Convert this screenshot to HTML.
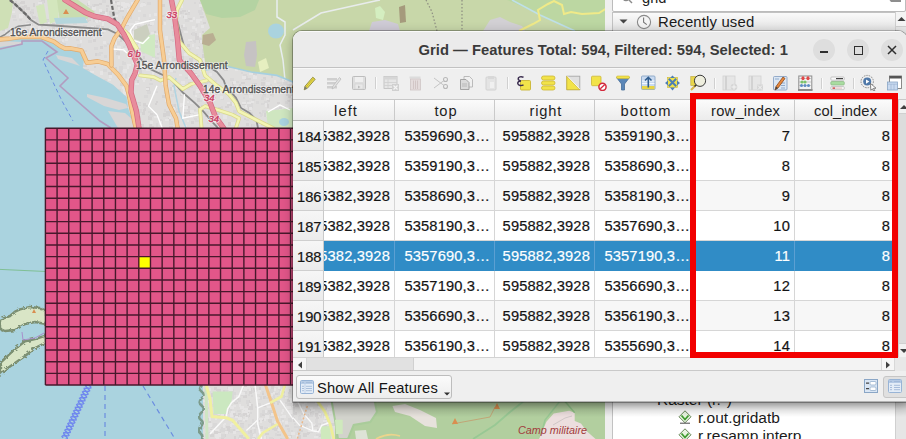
<!DOCTYPE html>
<html><head><meta charset="utf-8"><style>
*{box-sizing:border-box}
html,body{margin:0;padding:0}
body{width:906px;height:439px;overflow:hidden;position:relative;background:#e0dfdf;font-family:"Liberation Sans",sans-serif;color:#1e1e1e}
.a{position:absolute}
#map{position:absolute;left:0;top:0}
#panel{position:absolute;left:605px;top:0;width:301px;height:439px;background:#efefef;overflow:hidden}
#dlgshadow{position:absolute;left:293px;top:31px;width:614px;height:371px;border-radius:9px 9px 0 0;box-shadow:0 0 0 1px rgba(0,0,0,.28),0 3px 12px rgba(0,0,0,.30)}
#dlg{position:absolute;left:293px;top:31px;width:614px;height:371px;background:#efefef;border-radius:9px 9px 0 0;overflow:hidden}
#title{position:absolute;left:0;top:0;width:100%;height:37px;background:#ebebeb;border-bottom:1px solid #c2c2c2;border-top:1px solid #fafafa}
#title .t{position:absolute;left:125.5px;top:10px;font-weight:bold;font-size:14.75px;letter-spacing:0.03px;color:#3a3a3a;white-space:nowrap}
.wb{position:absolute;top:7px;width:22px;height:22px;border-radius:11px;background:#dedede}
#tb{position:absolute;left:0;top:37px;width:100%;height:32px;background:#efefef;border-bottom:1px solid #c8c8c8;border-top:1px solid #f8f8f8}
#tbl{position:absolute;left:0;top:69px;width:605px;height:257px;background:#fff;overflow:hidden}
.hd{position:absolute;top:0;height:21px;background:linear-gradient(#fbfbfb,#ececec);border-right:1px solid #cacaca;border-bottom:1px solid #b9b9b9;font-size:14.7px;text-align:center;line-height:22px;color:#1e1e1e;white-space:nowrap;letter-spacing:0.45px}
.c{position:absolute;height:30px;border-right:1px solid #d6d6d6;border-bottom:1px solid #d6d6d6;font-size:14.7px;line-height:31px;text-align:right;padding-right:4px;white-space:nowrap;overflow:hidden;letter-spacing:0.15px;color:#141414;-webkit-text-stroke:0.2px}
.rh{position:absolute;left:0;width:31px;height:30px;background:linear-gradient(#f6f6f6,#ebebeb);border-right:1px solid #c9c9c9;border-bottom:1px solid #cfcfcf;font-size:14.7px;line-height:32.5px;padding-left:4px;white-space:nowrap;overflow:hidden;color:#141414;-webkit-text-stroke:0.2px}
.sb{position:absolute;background:#f0f0f0}
</style></head><body>
<svg id="map" width="906" height="439" viewBox="0 0 906 439"><defs><filter id="rough" x="-10%" y="-10%" width="120%" height="120%"><feTurbulence type="fractalNoise" baseFrequency="0.28" numOctaves="2" seed="3"/><feDisplacementMap in="SourceGraphic" scale="4"/><feGaussianBlur stdDeviation="0.45"/></filter></defs><rect width="906" height="439" fill="#dfdedd"/><path d="M28 76h4v2h-4zM172 6h2v3h-2zM154 114h4v2h-4zM100 46h3v3h-3zM246 123h3v3h-3zM38 32h3v4h-3zM281 20h2v2h-2zM4 108h2v2h-2zM117 51h3v3h-3zM20 27h2v2h-2zM291 61h3v2h-3zM268 99h2v3h-2zM204 34h3v2h-3zM156 101h2v2h-2zM289 124h3v2h-3zM246 62h3v3h-3zM245 16h3v3h-3zM116 52h4v3h-4zM190 68h4v3h-4zM242 27h2v2h-2zM224 42h3v4h-3zM150 113h4v3h-4zM36 57h2v2h-2zM87 125h2v4h-2zM285 14h2v2h-2zM26 7h4v3h-4zM291 54h4v3h-4zM154 31h2v2h-2zM53 121h3v3h-3zM85 65h2v2h-2zM291 5h2v3h-2zM214 18h4v4h-4zM4 81h4v3h-4zM95 4h4v2h-4zM0 50h3v3h-3zM73 101h2v4h-2zM117 5h2v2h-2zM261 82h4v4h-4zM267 98h3v4h-3zM188 11h2v3h-2zM61 123h2v3h-2zM1 98h4v2h-4zM274 32h2v3h-2zM117 114h3v2h-3zM255 63h4v3h-4zM41 25h2v2h-2zM94 48h4v2h-4zM37 65h3v4h-3zM280 110h4v2h-4zM189 115h3v2h-3zM9 54h3v2h-3zM248 9h3v2h-3zM17 77h4v2h-4zM132 93h2v2h-2zM225 5h2v2h-2zM160 21h3v2h-3zM86 74h3v3h-3zM68 105h3v4h-3zM208 45h2v2h-2zM60 33h3v3h-3zM91 26h4v3h-4zM58 95h2v2h-2zM26 81h3v3h-3zM144 105h4v2h-4zM271 50h4v3h-4zM188 111h3v3h-3zM46 47h2v4h-2zM136 58h3v4h-3zM38 120h2v3h-2zM16 66h3v4h-3zM8 9h3v3h-3zM57 128h3v4h-3zM47 122h4v4h-4zM283 59h3v3h-3zM78 129h3v2h-3zM181 56h3v4h-3zM88 17h3v4h-3zM39 122h2v2h-2zM189 58h4v3h-4zM48 0h2v2h-2zM272 116h2v3h-2zM182 10h4v2h-4zM20 6h4v3h-4zM277 14h2v2h-2zM9 67h2v3h-2zM50 0h2v3h-2zM1 64h3v3h-3zM50 57h4v3h-4zM88 91h4v2h-4zM286 94h3v2h-3zM96 25h4v3h-4zM48 86h2v2h-2zM267 37h4v3h-4zM87 3h2v3h-2zM127 34h4v4h-4zM244 118h2v2h-2zM47 102h4v3h-4zM248 59h2v3h-2zM62 89h3v3h-3zM57 83h4v4h-4zM17 108h4v3h-4zM155 45h3v3h-3zM279 85h2v2h-2zM250 24h3v3h-3zM13 96h4v4h-4zM101 26h3v2h-3zM93 39h3v3h-3zM24 5h3v3h-3zM138 116h3v3h-3zM200 16h4v2h-4zM146 87h4v4h-4zM277 102h3v2h-3zM77 55h3v4h-3zM85 18h4v4h-4zM102 11h3v3h-3zM231 94h4v2h-4zM199 60h2v2h-2zM232 60h2v4h-2zM94 66h2v2h-2zM110 14h3v3h-3zM93 4h2v3h-2zM225 106h4v2h-4zM99 129h3v2h-3zM163 113h3v4h-3zM253 83h4v3h-4zM148 24h4v2h-4zM230 92h3v4h-3zM267 104h2v4h-2zM281 120h3v2h-3zM72 3h3v2h-3zM76 14h3v3h-3zM287 7h4v3h-4zM41 0h4v3h-4zM106 5h3v2h-3zM40 23h4v3h-4zM51 18h4v3h-4zM145 67h3v3h-3zM32 16h4v3h-4zM252 19h3v3h-3zM236 119h4v4h-4zM228 122h3v4h-3zM184 105h2v2h-2zM224 68h4v3h-4zM12 88h3v2h-3zM219 12h3v2h-3zM46 38h3v3h-3zM291 83h2v3h-2zM90 90h2v2h-2zM166 113h4v3h-4zM184 112h4v2h-4zM224 6h2v2h-2zM89 78h4v3h-4zM117 93h2v4h-2zM279 66h2v3h-2zM157 53h3v2h-3zM259 112h2v2h-2zM107 104h4v4h-4zM215 93h2v2h-2zM264 114h3v3h-3zM150 121h2v3h-2zM279 107h3v2h-3zM284 83h3v2h-3zM49 45h2v3h-2zM40 92h4v2h-4zM195 78h3v3h-3zM34 38h3v2h-3zM262 40h2v2h-2zM21 1h4v3h-4zM143 56h2v3h-2zM191 33h2v2h-2zM67 18h3v3h-3zM249 62h2v2h-2zM21 7h4v4h-4zM129 87h4v4h-4zM40 112h3v3h-3zM129 34h2v4h-2zM161 15h4v2h-4zM166 111h4v4h-4zM253 72h4v3h-4zM115 22h4v3h-4zM12 91h4v3h-4zM207 55h4v3h-4zM33 3h2v4h-2zM44 121h4v3h-4zM240 88h3v3h-3zM280 129h2v3h-2zM232 103h2v3h-2zM148 116h4v4h-4zM116 100h4v3h-4zM211 120h4v2h-4zM83 65h2v2h-2zM100 18h2v3h-2zM8 63h3v4h-3zM227 128h3v4h-3zM180 94h2v2h-2zM44 82h3v4h-3zM183 16h3v2h-3zM264 51h2v3h-2zM232 62h4v3h-4zM241 37h2v3h-2zM15 102h4v3h-4zM201 105h2v4h-2zM267 20h4v2h-4zM210 115h4v2h-4zM160 129h3v4h-3zM21 91h2v2h-2zM214 129h4v3h-4zM251 45h3v3h-3zM19 98h3v2h-3zM52 123h4v3h-4zM44 88h3v3h-3zM111 68h3v4h-3zM40 98h2v2h-2zM226 15h2v2h-2zM30 11h4v3h-4zM202 54h3v4h-3zM255 19h3v3h-3zM191 121h3v3h-3zM241 5h2v3h-2zM246 19h4v2h-4zM136 26h2v2h-2zM193 33h4v3h-4zM211 40h2v3h-2zM45 104h4v2h-4zM118 5h3v3h-3zM5 102h4v4h-4zM142 112h3v3h-3zM59 61h4v3h-4zM170 39h3v2h-3zM103 63h2v2h-2zM231 39h2v3h-2zM219 15h2v2h-2zM10 67h2v3h-2zM256 62h2v2h-2zM72 74h2v2h-2zM255 65h4v2h-4zM143 103h3v3h-3zM115 67h2v4h-2zM208 8h2v3h-2zM276 54h3v2h-3zM43 66h2v3h-2zM60 120h4v3h-4zM120 39h2v3h-2zM104 110h3v2h-3zM236 16h4v2h-4zM93 114h4v3h-4zM115 1h4v2h-4zM133 105h2v2h-2zM288 95h4v3h-4zM35 49h2v3h-2zM214 97h2v2h-2zM166 46h4v2h-4zM244 93h4v2h-4zM216 54h4v2h-4zM230 88h4v2h-4zM197 98h3v4h-3zM218 107h3v4h-3zM20 78h4v2h-4zM265 40h3v3h-3zM17 58h3v4h-3zM283 69h2v3h-2zM83 127h3v3h-3zM228 4h3v3h-3zM150 77h2v4h-2zM236 125h2v4h-2zM181 25h3v2h-3zM228 103h4v3h-4zM164 91h4v3h-4zM270 94h4v2h-4zM90 6h2v2h-2zM236 59h2v2h-2zM233 62h4v2h-4zM8 106h4v2h-4zM183 115h3v3h-3zM2 27h3v4h-3zM241 82h4v2h-4zM187 120h2v2h-2zM140 124h4v4h-4zM55 105h2v3h-2zM149 124h3v4h-3zM61 24h3v4h-3zM36 85h2v3h-2zM180 11h3v3h-3zM287 100h2v2h-2zM271 75h2v3h-2zM248 4h3v2h-3zM80 32h3v2h-3zM159 46h4v2h-4zM201 90h4v3h-4zM20 2h3v2h-3zM100 108h2v4h-2zM171 8h2v2h-2zM231 33h3v3h-3zM256 118h2v3h-2zM71 116h2v2h-2zM18 25h2v3h-2zM32 123h3v2h-3zM185 13h2v3h-2zM35 128h3v2h-3zM217 111h3v4h-3zM64 5h3v2h-3zM89 41h2v2h-2zM109 111h4v3h-4zM79 127h4v2h-4zM101 87h2v2h-2zM133 73h4v2h-4zM119 7h4v2h-4zM265 9h4v2h-4zM172 104h4v4h-4zM230 30h3v4h-3zM215 47h3v3h-3zM92 105h4v3h-4zM188 82h4v4h-4zM108 111h3v2h-3zM176 110h4v3h-4zM263 77h3v3h-3zM21 1h2v3h-2zM51 23h4v3h-4zM6 15h4v4h-4zM140 34h2v2h-2zM78 8h2v4h-2zM232 95h3v3h-3zM124 38h2v2h-2zM138 57h2v4h-2zM153 43h2v2h-2zM14 67h2v4h-2zM255 89h3v2h-3zM38 61h3v2h-3zM250 86h3v3h-3zM48 69h4v2h-4zM113 105h4v2h-4zM249 89h3v2h-3zM120 83h4v3h-4zM239 84h2v4h-2zM240 45h4v4h-4zM251 124h4v3h-4zM106 8h2v4h-2zM67 9h2v3h-2zM215 40h4v3h-4zM231 46h2v3h-2zM151 126h3v3h-3zM264 21h2v3h-2zM254 47h4v2h-4zM264 111h4v3h-4zM81 55h3v3h-3zM227 104h4v2h-4zM158 30h4v2h-4zM271 7h4v3h-4zM128 40h3v3h-3zM138 26h3v2h-3zM68 46h3v2h-3zM189 60h4v3h-4zM236 57h2v3h-2zM158 36h2v4h-2zM36 126h4v2h-4zM203 22h3v2h-3zM95 53h3v3h-3zM292 92h2v2h-2zM1 104h4v3h-4zM47 116h2v4h-2zM46 111h3v2h-3zM144 108h2v3h-2zM168 118h3v3h-3zM26 101h2v2h-2zM178 57h4v4h-4zM88 8h2v3h-2zM216 122h3v4h-3zM76 66h3v2h-3zM54 18h4v2h-4zM246 34h2v4h-2zM139 102h2v4h-2zM47 130h2v4h-2zM185 69h4v3h-4zM47 89h3v3h-3zM108 72h4v3h-4zM100 12h3v2h-3zM146 37h2v3h-2zM21 67h3v3h-3zM170 87h2v4h-2zM59 23h4v2h-4zM39 119h3v3h-3zM46 19h3v4h-3zM159 2h2v3h-2zM271 1h4v2h-4zM245 77h3v3h-3zM12 6h3v3h-3zM122 110h2v2h-2zM37 9h3v3h-3zM232 10h4v2h-4zM119 108h2v3h-2zM27 29h2v4h-2zM156 40h2v3h-2zM159 71h2v4h-2zM30 26h4v2h-4zM82 120h4v2h-4zM290 128h3v2h-3zM216 15h2v2h-2zM68 13h4v4h-4zM68 76h3v2h-3zM251 32h3v2h-3zM140 128h2v2h-2zM129 129h2v3h-2zM203 9h4v2h-4zM108 93h2v3h-2zM248 78h3v2h-3zM188 18h4v2h-4zM122 124h3v3h-3zM200 88h3v3h-3zM85 69h4v3h-4zM161 21h2v4h-2zM99 3h3v2h-3zM177 126h3v2h-3zM136 102h3v2h-3zM215 86h3v3h-3zM125 24h4v2h-4zM263 91h2v3h-2zM209 57h4v2h-4zM81 13h4v4h-4zM139 70h3v3h-3zM90 33h4v4h-4zM246 113h2v2h-2zM75 108h2v2h-2zM32 91h4v4h-4zM80 108h4v4h-4zM194 73h3v3h-3zM287 2h3v3h-3zM207 80h3v3h-3zM35 60h3v3h-3zM209 49h3v3h-3zM172 85h2v4h-2zM50 19h2v4h-2zM267 57h4v2h-4zM37 62h2v2h-2zM187 106h3v3h-3zM40 107h3v2h-3zM277 53h3v4h-3zM172 39h2v3h-2zM268 67h3v3h-3zM181 25h3v3h-3zM139 41h3v3h-3zM155 62h4v3h-4zM64 61h3v3h-3zM29 92h3v3h-3zM131 28h2v3h-2zM45 70h2v2h-2zM232 82h2v4h-2zM121 124h3v4h-3zM59 44h2v2h-2zM195 36h4v4h-4zM277 2h2v4h-2zM287 100h3v2h-3zM51 73h4v4h-4zM155 103h2v2h-2zM21 49h4v3h-4zM170 16h4v3h-4zM143 109h2v4h-2zM177 24h3v2h-3zM118 23h2v4h-2zM205 83h3v2h-3zM248 107h3v4h-3zM234 95h2v4h-2zM277 82h3v2h-3zM61 7h2v2h-2zM120 10h4v2h-4zM106 18h2v3h-2zM19 39h3v2h-3zM109 65h3v2h-3zM289 49h4v2h-4zM288 61h4v2h-4zM7 39h4v2h-4zM51 95h2v3h-2zM4 117h2v2h-2zM187 44h3v3h-3zM12 55h3v2h-3zM202 31h2v2h-2zM252 49h2v3h-2zM125 128h2v3h-2zM25 45h3v3h-3zM261 26h3v4h-3zM202 60h4v2h-4zM93 89h3v3h-3zM52 27h3v3h-3zM128 77h4v2h-4zM195 76h2v3h-2zM25 15h4v2h-4zM261 66h3v4h-3zM40 12h2v2h-2zM49 45h4v4h-4zM33 64h2v2h-2zM255 88h4v4h-4zM64 116h2v3h-2zM213 67h4v3h-4zM46 34h3v4h-3zM172 58h4v3h-4zM219 24h4v2h-4zM242 102h4v3h-4zM205 115h3v2h-3zM133 110h2v4h-2zM208 42h2v3h-2zM289 6h3v2h-3zM281 67h2v3h-2zM162 4h3v3h-3zM162 95h4v3h-4zM109 11h3v4h-3zM46 86h2v2h-2zM130 81h4v2h-4zM15 1h2v3h-2zM169 126h4v2h-4zM199 40h4v3h-4zM263 93h3v4h-3zM291 84h2v2h-2zM37 55h4v4h-4zM65 29h2v2h-2zM50 59h4v3h-4zM137 80h2v4h-2zM97 93h4v2h-4zM92 29h3v2h-3zM293 70h4v2h-4zM22 69h4v3h-4zM235 415h4v2h-4zM229 407h4v2h-4zM196 426h3v2h-3zM216 389h4v2h-4zM223 390h3v4h-3zM227 397h3v3h-3zM277 403h2v2h-2zM268 419h4v3h-4zM277 425h3v4h-3zM285 425h4v2h-4zM252 438h4v4h-4zM293 412h4v3h-4zM228 407h4v3h-4zM217 415h3v2h-3zM261 419h3v2h-3zM202 427h2v2h-2zM287 399h3v3h-3zM220 407h3v3h-3zM271 423h4v3h-4zM269 397h3v3h-3zM273 399h4v3h-4zM277 401h3v2h-3zM251 437h3v3h-3zM223 435h3v2h-3zM217 400h3v4h-3zM272 423h4v2h-4zM231 431h4v2h-4zM263 396h3v3h-3zM253 388h4v2h-4zM258 418h4v4h-4zM281 391h2v4h-2zM293 394h4v2h-4zM245 411h4v4h-4zM276 422h2v2h-2zM208 418h3v4h-3zM289 389h2v3h-2zM249 404h4v3h-4zM204 391h2v2h-2zM233 429h2v2h-2zM277 434h4v2h-4zM218 390h3v3h-3zM243 411h4v3h-4zM234 402h4v2h-4zM245 411h4v3h-4zM209 404h4v2h-4zM214 430h4v4h-4zM221 437h3v3h-3zM265 433h4v2h-4zM231 411h2v3h-2zM238 413h3v2h-3zM262 414h3v2h-3zM223 414h2v3h-2zM215 402h3v3h-3zM279 427h2v4h-2zM200 410h4v3h-4zM203 407h2v3h-2zM234 413h2v4h-2zM250 424h3v3h-3zM269 398h4v3h-4zM240 423h4v3h-4zM225 439h4v2h-4zM259 387h2v4h-2zM269 420h3v3h-3zM274 398h3v2h-3zM249 406h4v4h-4zM286 388h4v3h-4zM267 394h3v2h-3zM280 438h2v4h-2zM216 407h2v3h-2zM199 410h3v3h-3zM231 412h3v3h-3zM205 430h2v4h-2zM250 430h2v3h-2zM241 414h4v2h-4zM199 437h2v2h-2zM226 412h2v3h-2zM243 437h4v2h-4zM207 424h3v2h-3zM253 437h2v2h-2zM210 429h2v2h-2zM210 434h4v3h-4zM270 412h3v3h-3zM246 414h4v3h-4zM215 410h2v2h-2zM272 426h4v4h-4zM217 432h4v3h-4zM208 398h3v2h-3zM268 428h2v3h-2zM207 422h4v3h-4zM223 405h4v2h-4zM223 434h3v3h-3zM291 439h2v2h-2zM262 393h2v2h-2zM217 434h4v2h-4zM247 400h3v2h-3zM289 410h2v2h-2zM235 398h4v2h-4zM219 407h2v4h-2zM272 438h2v2h-2zM199 415h2v2h-2zM199 439h2v2h-2zM211 393h3v4h-3zM199 390h4v3h-4zM232 422h4v3h-4zM268 410h4v4h-4zM249 407h3v2h-3zM279 428h2v3h-2zM239 435h4v3h-4zM260 426h3v3h-3zM275 393h3v2h-3zM271 386h3v3h-3zM237 421h2v3h-2zM214 387h3v3h-3zM254 389h3v3h-3zM249 388h3v4h-3zM246 408h4v2h-4zM243 385h4v2h-4zM234 436h2v3h-2zM291 439h3v4h-3zM228 426h3v2h-3zM249 392h3v2h-3zM227 428h3v4h-3zM243 395h4v3h-4zM274 428h3v3h-3zM289 435h3v3h-3zM263 404h3v3h-3zM272 402h3v2h-3zM197 393h3v3h-3zM225 410h4v4h-4zM247 402h4v4h-4zM282 391h3v2h-3zM217 389h4v3h-4zM226 426h4v2h-4zM298 435h3v2h-3zM290 402h4v4h-4zM361 406h4v3h-4zM358 416h3v3h-3zM345 429h3v3h-3zM378 420h4v3h-4zM314 425h4v2h-4zM322 433h2v3h-2zM354 427h2v3h-2zM332 407h2v2h-2zM318 429h4v3h-4zM376 408h3v2h-3zM359 426h2v3h-2zM323 431h3v3h-3zM342 427h3v4h-3zM337 417h3v2h-3zM380 431h4v3h-4zM319 434h4v3h-4zM324 425h3v3h-3zM316 417h3v2h-3zM319 414h2v2h-2zM377 414h3v3h-3zM297 436h4v3h-4zM316 429h4v4h-4zM334 415h2v3h-2zM367 404h4v4h-4zM367 410h2v4h-2zM347 409h2v2h-2zM369 413h2v4h-2zM303 433h4v4h-4zM293 420h2v2h-2zM317 402h3v4h-3zM370 429h3v2h-3zM293 417h2v4h-2zM336 405h4v4h-4zM365 424h2v2h-2zM343 421h4v4h-4zM295 404h4v3h-4zM336 433h4v3h-4zM343 428h3v2h-3zM306 414h3v4h-3zM323 423h2v4h-2zM304 424h2v3h-2zM331 423h4v3h-4zM375 430h3v2h-3zM344 415h4v4h-4zM315 413h3v4h-3zM307 432h3v2h-3zM332 402h2v3h-2zM307 432h2v3h-2zM369 432h3v4h-3zM318 423h3v2h-3zM366 418h3v4h-3zM291 417h4v2h-4zM310 412h4v3h-4zM330 439h4v3h-4zM310 409h3v2h-3zM365 425h3v2h-3zM301 430h2v2h-2zM372 427h3v3h-3zM346 412h4v3h-4z" fill="#d5d3d3"/><path d="M125 41h3v3h-3zM73 23h4v2h-4zM35 54h4v2h-4zM124 125h2v3h-2zM214 40h3v3h-3zM83 50h4v2h-4zM104 79h3v2h-3zM49 52h2v2h-2zM253 36h3v2h-3zM252 124h3v3h-3zM264 101h4v3h-4zM7 114h3v2h-3zM280 78h3v2h-3zM144 95h4v3h-4zM43 107h4v3h-4zM50 62h4v3h-4zM17 25h2v2h-2zM156 62h4v3h-4zM270 116h2v3h-2zM189 48h2v2h-2zM244 21h3v3h-3zM123 46h2v2h-2zM79 17h3v4h-3zM119 70h3v3h-3zM251 9h4v3h-4zM25 109h4v3h-4zM175 90h2v2h-2zM230 78h4v3h-4zM222 30h3v3h-3zM203 81h2v3h-2zM79 87h4v3h-4zM58 127h4v2h-4zM22 66h4v4h-4zM149 115h4v2h-4zM115 21h4v3h-4zM88 18h3v2h-3zM209 117h2v2h-2zM114 113h2v4h-2zM76 85h2v3h-2zM35 84h2v3h-2zM161 59h2v3h-2zM220 54h3v3h-3zM79 98h3v3h-3zM27 117h3v3h-3zM125 99h4v4h-4zM0 51h4v4h-4zM285 14h4v3h-4zM270 84h2v2h-2zM155 57h4v2h-4zM0 70h4v2h-4zM285 18h2v2h-2zM137 41h4v4h-4zM130 14h2v2h-2zM280 16h4v2h-4zM139 48h4v2h-4zM75 97h4v2h-4zM280 124h3v2h-3zM89 90h2v2h-2zM135 102h3v3h-3zM69 70h4v3h-4zM1 115h2v3h-2zM27 21h4v3h-4zM196 54h2v3h-2zM124 107h3v4h-3zM227 17h2v2h-2zM102 21h2v2h-2zM12 73h4v2h-4zM34 78h3v3h-3zM190 40h2v2h-2zM131 57h2v3h-2zM237 52h2v2h-2zM222 21h4v2h-4zM42 65h4v2h-4zM180 31h3v2h-3zM232 34h4v2h-4zM74 70h4v3h-4zM262 95h4v2h-4zM19 19h3v2h-3zM149 83h4v2h-4zM19 81h4v3h-4zM210 1h4v3h-4zM24 85h2v4h-2zM268 25h3v3h-3zM138 109h4v4h-4zM280 30h4v3h-4zM60 41h3v2h-3zM148 111h3v2h-3zM158 28h4v2h-4zM277 37h2v3h-2zM164 14h2v2h-2zM261 97h3v3h-3zM60 34h4v3h-4zM221 98h3v2h-3zM153 113h3v3h-3zM98 84h4v3h-4zM205 111h4v3h-4zM229 93h3v2h-3zM273 24h3v3h-3zM187 108h3v3h-3zM214 80h3v2h-3zM198 75h2v2h-2zM275 69h2v4h-2zM103 83h4v4h-4zM292 99h3v3h-3zM104 111h2v2h-2zM288 88h3v4h-3zM187 86h3v4h-3zM246 87h2v2h-2zM69 18h3v2h-3zM122 16h2v3h-2zM139 68h4v2h-4zM100 33h2v2h-2zM117 72h3v3h-3zM224 8h3v3h-3zM76 39h3v2h-3zM12 15h4v3h-4zM23 40h4v2h-4zM178 41h4v3h-4zM48 104h3v3h-3zM226 30h3v3h-3zM80 111h4v3h-4zM53 91h3v3h-3zM228 111h2v4h-2zM63 120h2v2h-2zM291 29h2v2h-2zM17 72h2v4h-2zM88 77h4v2h-4zM109 51h3v2h-3zM274 113h4v2h-4zM107 43h4v2h-4zM162 19h4v2h-4zM164 109h2v3h-2zM127 34h2v2h-2zM85 117h2v3h-2zM176 108h4v3h-4zM171 26h2v3h-2zM246 119h3v2h-3zM247 112h3v2h-3zM39 87h2v3h-2zM11 91h3v4h-3zM72 108h4v3h-4zM71 12h3v2h-3zM216 34h4v3h-4zM52 35h3v3h-3zM246 68h3v4h-3zM95 19h4v2h-4zM194 2h2v2h-2zM127 66h2v2h-2zM10 83h2v3h-2zM152 56h4v2h-4zM264 11h3v4h-3zM36 17h2v3h-2zM80 96h4v2h-4zM107 116h2v3h-2zM116 120h2v4h-2zM163 64h2v4h-2zM17 3h3v3h-3zM172 65h4v3h-4zM249 36h3v2h-3zM163 50h2v3h-2zM112 39h3v4h-3zM169 76h2v4h-2zM284 79h2v2h-2zM261 124h2v2h-2zM88 70h2v3h-2zM152 67h4v2h-4zM272 20h2v3h-2zM31 13h2v3h-2zM95 93h3v2h-3zM13 121h4v2h-4zM71 51h4v2h-4zM51 47h2v4h-2zM116 47h3v4h-3zM118 9h2v4h-2zM162 50h3v2h-3zM130 109h4v2h-4zM63 53h3v3h-3zM276 130h3v3h-3zM199 12h4v3h-4zM261 9h4v4h-4zM193 91h2v4h-2zM102 0h4v3h-4zM200 5h2v3h-2zM180 29h3v2h-3zM88 115h2v3h-2zM243 97h2v2h-2zM94 48h3v2h-3zM246 111h4v3h-4zM55 87h4v2h-4zM40 101h2v2h-2zM247 105h4v2h-4zM143 106h3v2h-3zM235 15h4v3h-4zM104 90h2v4h-2zM172 33h4v3h-4zM183 27h4v3h-4zM13 19h4v2h-4zM256 101h3v3h-3zM250 32h4v3h-4zM18 44h2v4h-2zM40 1h4v3h-4zM88 40h4v3h-4zM22 25h4v3h-4zM170 128h3v3h-3zM81 33h2v2h-2zM17 54h2v3h-2zM8 41h3v2h-3zM62 69h4v2h-4zM286 59h2v3h-2zM39 1h3v3h-3zM71 128h3v3h-3zM32 95h2v3h-2zM198 46h2v2h-2zM277 82h2v2h-2zM208 31h3v2h-3zM228 112h2v4h-2zM68 56h2v2h-2zM58 6h4v4h-4zM97 53h4v3h-4zM117 41h3v4h-3zM164 89h3v3h-3zM255 46h2v4h-2zM195 120h4v2h-4zM238 31h2v4h-2zM94 47h4v3h-4zM153 59h2v2h-2zM160 119h2v2h-2zM27 83h4v2h-4zM130 48h4v2h-4zM109 87h2v2h-2zM32 73h4v3h-4zM122 62h4v3h-4zM118 5h4v3h-4zM55 70h3v2h-3zM75 112h3v3h-3zM200 40h2v2h-2zM36 18h4v4h-4zM53 120h3v4h-3zM254 120h2v2h-2zM292 122h3v2h-3zM101 123h3v2h-3zM34 64h3v2h-3zM26 22h4v4h-4zM12 80h4v4h-4zM25 99h3v2h-3zM292 103h3v3h-3zM15 48h3v3h-3zM171 104h3v3h-3zM137 103h4v2h-4zM156 123h2v4h-2zM15 86h3v3h-3zM242 53h2v3h-2zM194 118h3v2h-3zM143 2h2v4h-2zM114 43h2v2h-2zM261 79h4v2h-4zM149 130h2v3h-2zM287 84h4v3h-4zM144 127h3v4h-3zM47 75h4v3h-4zM262 26h4v2h-4zM216 22h2v2h-2zM285 101h3v3h-3zM91 123h2v2h-2zM118 89h3v2h-3zM78 27h4v3h-4zM138 73h4v3h-4zM260 114h2v3h-2zM283 82h4v3h-4zM247 103h4v2h-4zM196 75h3v3h-3zM105 91h2v4h-2zM158 61h3v2h-3zM280 36h2v2h-2zM83 25h4v3h-4zM77 46h2v3h-2zM107 115h3v2h-3zM128 95h3v4h-3zM39 2h2v3h-2zM60 74h4v4h-4zM253 129h4v3h-4zM266 26h2v3h-2zM214 110h4v2h-4zM200 100h2v2h-2zM276 57h4v2h-4zM287 85h4v3h-4zM261 103h3v2h-3zM125 44h2v2h-2zM47 69h3v3h-3zM62 37h4v2h-4zM212 84h3v4h-3zM51 129h4v4h-4zM194 41h2v2h-2zM274 46h3v2h-3zM66 25h2v2h-2zM194 109h2v2h-2zM143 14h3v3h-3zM35 62h2v2h-2zM63 79h4v4h-4zM150 41h2v3h-2zM271 60h4v2h-4zM41 47h3v4h-3zM205 2h3v3h-3zM199 2h4v2h-4zM182 28h4v2h-4zM40 42h4v2h-4zM280 84h3v4h-3zM198 10h4v3h-4zM62 43h4v3h-4zM199 92h3v2h-3zM159 52h2v3h-2zM133 43h3v2h-3zM32 82h2v2h-2zM56 24h4v4h-4zM210 125h4v2h-4zM153 40h4v2h-4zM31 9h3v3h-3zM115 12h4v2h-4zM267 87h3v3h-3zM265 61h4v3h-4zM57 125h2v4h-2zM12 5h4v2h-4zM240 35h3v2h-3zM221 106h2v3h-2zM233 110h4v4h-4zM229 102h4v2h-4zM252 83h2v3h-2zM91 82h4v3h-4zM176 130h4v2h-4zM122 114h3v2h-3zM64 115h4v3h-4zM187 10h3v2h-3zM135 77h2v4h-2zM254 117h3v3h-3zM57 41h3v2h-3zM246 100h3v3h-3zM104 55h3v3h-3zM250 103h3v3h-3zM235 20h3v3h-3zM34 117h4v2h-4zM103 69h4v3h-4zM34 33h3v3h-3zM236 19h2v2h-2zM161 120h2v4h-2zM245 5h3v3h-3zM27 113h4v3h-4zM179 87h4v2h-4zM247 47h4v2h-4zM96 84h3v4h-3zM203 84h2v3h-2zM249 116h2v3h-2zM122 61h2v2h-2zM68 60h4v4h-4zM92 4h2v2h-2zM284 41h3v2h-3zM78 114h3v2h-3zM119 91h2v4h-2zM32 97h2v2h-2zM255 3h2v2h-2zM91 74h2v3h-2zM70 5h4v2h-4zM24 43h2v3h-2zM117 26h2v3h-2zM98 35h4v2h-4zM237 38h4v4h-4zM171 94h3v3h-3zM266 86h2v2h-2zM109 66h3v2h-3zM240 63h4v2h-4zM253 92h3v2h-3zM261 113h2v3h-2zM99 14h4v3h-4zM262 110h4v3h-4zM46 20h3v3h-3zM261 56h2v3h-2zM167 67h4v2h-4zM36 28h2v3h-2zM176 23h3v3h-3zM109 112h2v4h-2zM293 26h3v2h-3zM68 103h3v4h-3zM239 8h3v4h-3zM147 91h4v3h-4zM243 74h4v2h-4zM82 120h4v4h-4zM90 6h2v3h-2zM233 92h3v2h-3zM192 32h3v4h-3zM247 41h4v4h-4zM149 19h2v4h-2zM167 70h2v3h-2zM185 77h4v2h-4zM219 88h3v3h-3zM292 66h2v3h-2zM274 19h3v2h-3zM6 57h2v3h-2zM20 6h2v2h-2zM188 129h2v3h-2zM164 54h2v3h-2zM119 66h4v4h-4zM125 74h2v4h-2zM199 38h3v2h-3zM28 67h3v2h-3zM149 66h4v2h-4zM201 6h2v4h-2zM84 86h3v2h-3zM278 125h4v4h-4zM275 108h4v2h-4zM210 29h4v2h-4zM89 35h3v2h-3zM172 115h3v2h-3zM26 128h4v3h-4zM176 120h4v3h-4zM14 65h3v2h-3zM207 121h3v3h-3zM228 58h3v3h-3zM200 116h2v2h-2zM196 24h2v3h-2zM172 31h2v3h-2zM17 115h2v2h-2zM250 112h3v3h-3zM245 76h3v2h-3zM127 66h2v3h-2zM255 128h4v2h-4zM117 115h4v3h-4zM215 40h4v2h-4zM224 32h4v2h-4zM72 67h3v2h-3zM116 71h4v2h-4zM237 30h2v4h-2zM29 100h4v3h-4zM287 17h2v3h-2zM201 110h3v2h-3zM71 91h4v2h-4zM137 106h2v2h-2zM15 123h3v2h-3zM100 31h4v3h-4zM156 91h2v2h-2zM123 38h2v3h-2zM83 112h3v3h-3zM182 12h2v2h-2zM141 50h4v4h-4zM188 72h4v2h-4zM193 40h3v2h-3zM147 2h4v3h-4zM90 15h4v3h-4zM173 71h3v2h-3zM202 49h4v4h-4zM213 48h4v2h-4zM53 106h3v3h-3zM187 13h3v2h-3zM173 90h3v3h-3zM61 102h3v3h-3zM204 38h4v2h-4zM235 81h4v2h-4zM175 95h2v2h-2zM4 43h2v2h-2zM77 44h4v3h-4zM205 31h3v4h-3zM279 82h3v2h-3zM37 28h4v3h-4zM99 52h4v2h-4zM87 81h4v3h-4zM238 39h3v2h-3zM248 6h2v3h-2zM120 74h3v2h-3zM127 91h3v4h-3zM40 100h2v3h-2zM235 17h4v3h-4zM185 19h4v3h-4zM214 57h2v3h-2zM190 85h3v3h-3zM168 17h3v3h-3zM70 68h3v2h-3zM70 2h4v4h-4zM245 31h2v3h-2zM130 15h2v4h-2zM34 77h4v3h-4zM272 95h2v2h-2zM51 65h4v3h-4zM116 99h3v3h-3zM73 127h3v3h-3zM241 72h2v2h-2zM172 56h2v4h-2zM130 23h2v2h-2zM162 52h4v2h-4zM29 23h4v3h-4zM93 19h4v3h-4zM252 99h3v2h-3zM23 118h4v3h-4zM4 54h4v3h-4zM250 106h3v2h-3zM104 45h3v2h-3zM169 121h4v4h-4zM267 98h3v2h-3zM263 404h2v2h-2zM239 398h2v3h-2zM287 403h4v3h-4zM248 431h2v3h-2zM195 390h4v2h-4zM201 399h2v2h-2zM205 417h2v3h-2zM287 428h3v2h-3zM273 395h2v3h-2zM250 412h2v2h-2zM279 390h4v3h-4zM232 392h4v3h-4zM239 429h4v3h-4zM238 420h4v2h-4zM287 392h4v2h-4zM289 404h3v3h-3zM221 435h3v2h-3zM282 386h4v2h-4zM242 430h2v4h-2zM203 426h2v2h-2zM225 431h4v3h-4zM258 403h3v4h-3zM220 406h2v2h-2zM262 431h2v2h-2zM227 386h4v3h-4zM259 396h3v4h-3zM250 437h4v4h-4zM269 391h3v4h-3zM247 403h4v2h-4zM248 424h3v4h-3zM237 410h4v2h-4zM235 399h2v4h-2zM238 437h3v2h-3zM233 392h2v3h-2zM223 404h2v3h-2zM254 429h2v4h-2zM250 434h2v3h-2zM230 429h3v4h-3zM266 412h3v4h-3zM241 393h4v3h-4zM223 435h2v2h-2zM232 395h2v4h-2zM196 418h2v3h-2zM218 417h3v2h-3zM280 392h4v3h-4zM291 430h2v2h-2zM200 425h2v3h-2zM202 409h2v3h-2zM252 419h2v4h-2zM228 409h4v2h-4zM246 400h3v4h-3zM251 395h2v2h-2zM270 389h4v3h-4zM267 393h3v2h-3zM248 394h2v2h-2zM225 390h3v4h-3zM277 431h2v2h-2zM230 389h4v3h-4zM290 400h3v2h-3zM279 389h4v3h-4zM292 402h3v3h-3zM269 437h4v3h-4zM272 415h4v2h-4zM279 423h4v3h-4zM244 391h3v3h-3zM264 427h4v2h-4zM199 422h3v4h-3zM248 425h4v3h-4zM206 389h3v2h-3zM201 433h2v2h-2zM288 430h2v2h-2zM281 418h3v3h-3zM252 421h3v2h-3zM291 414h3v3h-3zM223 395h4v4h-4zM260 413h2v4h-2zM265 436h2v3h-2zM221 434h4v4h-4zM198 404h4v2h-4zM238 419h2v3h-2zM213 425h4v3h-4zM213 403h3v3h-3zM236 430h3v2h-3zM223 394h4v2h-4zM210 431h3v2h-3zM285 402h3v2h-3zM282 395h4v3h-4zM213 423h4v2h-4zM197 414h2v4h-2zM211 426h2v2h-2zM283 416h3v2h-3zM270 416h4v2h-4zM245 419h2v3h-2zM275 433h2v3h-2zM262 410h4v4h-4zM251 425h4v3h-4zM213 413h4v2h-4zM198 428h4v4h-4zM229 386h2v3h-2zM266 387h2v2h-2zM206 421h2v3h-2zM255 406h4v2h-4zM205 433h3v4h-3zM240 414h3v4h-3zM199 428h4v3h-4zM206 407h3v2h-3zM237 428h4v2h-4zM262 391h2v2h-2zM216 437h3v2h-3zM224 430h3v2h-3zM263 411h3v3h-3zM240 424h4v4h-4zM212 405h2v2h-2zM277 396h4v3h-4zM210 424h2v3h-2zM211 414h4v2h-4zM278 392h3v3h-3zM229 391h3v3h-3zM221 427h4v3h-4zM293 401h3v4h-3zM229 396h2v2h-2zM209 404h4v2h-4zM271 391h3v2h-3zM292 407h3v3h-3zM207 432h4v2h-4zM288 418h4v4h-4zM278 387h2v3h-2zM220 429h4v3h-4zM222 394h4v2h-4zM250 433h4v3h-4zM247 415h2v3h-2zM286 435h4v4h-4zM238 400h3v2h-3zM282 438h4v2h-4zM252 390h2v3h-2zM243 439h4v2h-4zM264 413h2v2h-2zM196 391h3v2h-3zM256 425h4v3h-4zM265 397h3v2h-3zM312 411h2v4h-2zM323 421h3v4h-3zM358 416h3v3h-3zM343 418h2v2h-2zM298 426h3v3h-3zM335 407h3v3h-3zM300 419h2v2h-2zM294 423h2v2h-2zM338 439h4v2h-4zM346 402h4v3h-4zM319 412h2v3h-2zM323 414h4v4h-4zM361 409h4v3h-4zM326 417h4v4h-4zM322 431h4v3h-4zM356 429h3v3h-3zM309 415h3v2h-3zM368 424h3v4h-3zM310 430h3v3h-3zM325 429h4v2h-4zM340 437h2v4h-2zM330 425h2v2h-2zM371 424h2v3h-2zM318 411h2v2h-2zM304 417h2v2h-2zM369 402h4v4h-4zM343 420h3v3h-3zM316 423h4v2h-4zM348 410h3v4h-3zM311 413h2v4h-2zM325 418h2v3h-2zM298 416h2v4h-2zM337 423h2v3h-2zM362 428h4v2h-4zM301 405h4v3h-4zM358 415h4v2h-4zM344 422h2v2h-2zM293 409h2v4h-2zM299 415h2v4h-2zM373 420h3v3h-3zM297 431h3v2h-3zM301 413h2v2h-2zM326 408h4v2h-4zM315 419h3v4h-3zM362 434h3v4h-3zM325 432h4v3h-4zM341 430h4v3h-4zM337 416h4v3h-4zM346 431h4v3h-4zM320 414h2v4h-2zM369 417h3v3h-3zM298 429h3v3h-3zM310 421h2v2h-2zM362 422h4v2h-4zM377 438h3v4h-3zM364 423h4v2h-4zM316 434h4v2h-4zM306 423h2v3h-2zM306 408h4v2h-4zM318 404h4v3h-4zM325 413h4v3h-4zM304 414h4v4h-4zM336 418h4v3h-4zM326 419h3v3h-3zM363 411h4v3h-4zM367 437h2v3h-2zM303 423h2v2h-2zM298 432h3v2h-3zM370 431h3v2h-3zM294 426h4v2h-4zM323 409h3v3h-3z" fill="#d9d8d8"/><path d="M95 20h3v2h-3zM127 9h2v3h-2zM36 29h3v4h-3zM85 19h2v2h-2zM53 76h3v2h-3zM209 73h3v3h-3zM123 48h3v4h-3zM30 74h3v4h-3zM220 96h3v3h-3zM7 124h3v2h-3zM236 106h4v2h-4zM76 90h4v3h-4zM138 44h3v4h-3zM140 23h4v2h-4zM291 4h3v3h-3zM46 71h2v3h-2zM267 46h3v3h-3zM123 119h3v3h-3zM200 69h3v3h-3zM165 99h4v3h-4zM285 79h2v2h-2zM62 39h2v3h-2zM64 124h3v3h-3zM162 57h2v2h-2zM79 2h2v2h-2zM151 32h3v3h-3zM127 64h4v2h-4zM90 28h2v2h-2zM131 34h4v4h-4zM25 124h4v2h-4zM44 94h3v2h-3zM242 76h4v3h-4zM110 59h2v2h-2zM199 64h2v3h-2zM273 117h2v3h-2zM216 33h2v2h-2zM22 118h2v2h-2zM188 10h2v2h-2zM208 37h3v3h-3zM219 34h3v3h-3zM250 36h2v3h-2zM227 102h3v2h-3zM14 95h3v3h-3zM138 45h2v3h-2zM285 32h2v2h-2zM25 101h2v2h-2zM154 76h3v2h-3zM146 88h3v2h-3zM124 48h3v3h-3zM123 89h2v3h-2zM68 29h4v2h-4zM145 24h2v3h-2zM273 43h2v4h-2zM225 40h4v2h-4zM216 62h3v2h-3zM98 124h2v3h-2zM93 36h2v3h-2zM277 8h4v2h-4zM239 17h3v2h-3zM221 32h2v2h-2zM78 11h2v3h-2zM285 23h2v3h-2zM129 24h2v2h-2zM55 8h2v2h-2zM12 38h2v2h-2zM57 10h3v2h-3zM76 101h4v2h-4zM239 106h3v2h-3zM120 103h3v2h-3zM121 2h4v4h-4zM245 6h4v2h-4zM243 24h2v2h-2zM27 57h3v2h-3zM201 94h2v4h-2zM130 23h4v2h-4zM74 83h4v3h-4zM143 80h2v2h-2zM104 14h3v2h-3zM283 7h4v4h-4zM70 8h4v2h-4zM192 26h3v3h-3zM68 5h3v3h-3zM276 34h2v3h-2zM128 102h3v2h-3zM76 31h4v4h-4zM266 82h4v3h-4zM33 81h2v4h-2zM8 5h4v3h-4zM240 107h4v2h-4zM278 118h4v2h-4zM185 62h2v3h-2zM273 6h4v4h-4zM283 77h4v3h-4zM49 122h4v3h-4zM288 82h4v2h-4zM233 95h3v2h-3zM117 103h4v3h-4zM217 118h3v3h-3zM190 110h4v3h-4zM141 3h4v3h-4zM117 2h3v3h-3zM135 21h4v2h-4zM105 85h2v3h-2zM265 103h2v4h-2zM286 12h4v3h-4zM246 26h4v3h-4zM265 91h2v2h-2zM253 1h4v3h-4zM146 39h3v3h-3zM22 83h3v2h-3zM150 63h4v2h-4zM243 52h3v2h-3zM88 1h2v4h-2zM181 81h4v3h-4zM30 24h2v3h-2zM4 113h2v2h-2zM166 75h4v3h-4zM131 2h3v3h-3zM287 62h3v2h-3zM38 2h4v2h-4zM218 120h3v3h-3zM251 95h2v3h-2zM210 1h2v3h-2zM198 19h4v2h-4zM182 85h4v3h-4zM213 2h2v4h-2zM126 115h3v3h-3zM68 75h4v4h-4zM10 129h4v3h-4zM75 73h3v4h-3zM30 41h2v2h-2zM70 19h4v2h-4zM133 44h4v3h-4zM42 83h3v3h-3zM152 58h3v2h-3zM169 117h2v2h-2zM73 106h2v2h-2zM153 91h2v4h-2zM278 2h3v3h-3zM99 31h3v3h-3zM102 22h2v4h-2zM179 74h3v2h-3zM9 43h2v3h-2zM129 8h3v3h-3zM122 87h2v2h-2zM249 107h3v3h-3zM270 129h2v3h-2zM268 17h4v2h-4zM203 37h3v2h-3zM154 13h3v3h-3zM129 81h4v2h-4zM242 67h2v4h-2zM101 122h3v4h-3zM121 8h3v2h-3zM172 87h2v3h-2zM168 53h2v2h-2zM180 105h2v2h-2zM132 50h2v4h-2zM10 86h3v2h-3zM38 26h3v3h-3zM8 93h2v2h-2zM25 23h4v2h-4zM56 93h2v2h-2zM117 46h4v3h-4zM265 13h2v2h-2zM126 98h2v3h-2zM91 83h2v4h-2zM146 68h4v3h-4zM220 11h4v2h-4zM130 44h3v3h-3zM183 66h4v2h-4zM2 90h2v3h-2zM184 15h3v4h-3zM47 58h3v2h-3zM219 43h4v2h-4zM105 12h2v3h-2zM7 51h2v2h-2zM154 116h4v2h-4zM70 5h3v3h-3zM118 7h2v3h-2zM46 39h3v2h-3zM111 1h4v3h-4zM57 11h2v3h-2zM266 113h4v4h-4zM24 105h4v2h-4zM87 74h4v3h-4zM65 96h4v2h-4zM109 75h3v3h-3zM66 74h2v3h-2zM184 125h3v3h-3zM165 119h4v2h-4zM36 48h4v4h-4zM278 2h3v2h-3zM142 4h4v2h-4zM203 58h2v4h-2zM22 43h2v4h-2zM169 50h3v2h-3zM142 29h2v4h-2zM19 129h3v3h-3zM200 40h4v3h-4zM69 3h2v3h-2zM282 78h2v4h-2zM187 120h2v2h-2zM124 70h3v3h-3zM288 75h2v3h-2zM140 4h3v3h-3zM76 79h4v4h-4zM251 101h3v2h-3zM188 39h4v2h-4zM47 89h3v3h-3zM136 52h3v3h-3zM59 82h2v2h-2zM19 14h4v4h-4zM126 23h4v2h-4zM102 28h4v4h-4zM3 89h3v3h-3zM223 115h4v4h-4zM2 79h4v2h-4zM247 102h4v2h-4zM285 0h4v4h-4zM100 71h3v4h-3zM180 88h2v3h-2zM45 33h2v2h-2zM204 58h3v3h-3zM182 68h4v2h-4zM59 74h2v2h-2zM281 38h4v4h-4zM126 79h2v2h-2zM38 80h4v4h-4zM241 26h3v4h-3zM251 33h2v2h-2zM107 104h2v4h-2zM195 95h2v2h-2zM208 104h3v3h-3zM130 114h2v3h-2zM65 94h4v4h-4zM86 30h3v2h-3zM96 20h2v3h-2zM27 60h4v3h-4zM122 109h2v3h-2zM48 22h4v2h-4zM83 72h4v4h-4zM195 28h2v3h-2zM266 98h3v2h-3zM40 108h4v4h-4zM242 102h4v2h-4zM220 110h2v3h-2zM69 64h4v3h-4zM291 24h4v3h-4zM272 116h3v2h-3zM97 35h2v2h-2zM185 49h3v3h-3zM146 47h4v2h-4zM2 122h2v2h-2zM184 31h4v2h-4zM187 101h2v2h-2zM115 93h3v4h-3zM35 58h2v3h-2zM236 45h2v4h-2zM99 9h3v3h-3zM190 114h3v4h-3zM64 60h4v3h-4zM188 75h3v4h-3zM122 109h3v3h-3zM155 33h3v2h-3zM6 118h4v4h-4zM173 16h2v3h-2zM270 89h4v3h-4zM212 7h3v3h-3zM178 15h3v2h-3zM70 128h2v2h-2zM70 121h2v3h-2zM249 72h4v3h-4zM180 103h3v3h-3zM160 38h3v2h-3zM80 40h2v3h-2zM267 109h4v2h-4zM40 118h4v2h-4zM273 67h4v3h-4zM126 15h4v3h-4zM100 125h2v4h-2zM76 125h3v3h-3zM20 9h3v2h-3zM52 13h2v3h-2zM31 27h3v2h-3zM3 25h4v2h-4zM28 128h3v3h-3zM274 72h2v2h-2zM184 106h4v3h-4zM217 70h2v3h-2zM70 109h2v4h-2zM165 36h3v4h-3zM49 76h3v3h-3zM194 112h4v2h-4zM123 69h4v4h-4zM207 76h3v3h-3zM128 77h2v2h-2zM292 83h4v2h-4zM40 53h3v2h-3zM115 15h3v2h-3zM138 10h3v2h-3zM177 129h4v3h-4zM235 12h3v2h-3zM132 61h4v3h-4zM65 38h3v3h-3zM38 8h3v2h-3zM135 26h2v3h-2zM235 67h3v4h-3zM123 92h3v3h-3zM274 80h2v3h-2zM270 17h4v4h-4zM134 72h2v4h-2zM222 51h2v3h-2zM235 4h3v4h-3zM44 111h2v2h-2zM253 75h2v3h-2zM116 37h4v2h-4zM128 40h2v3h-2zM159 121h3v4h-3zM268 5h3v3h-3zM38 130h2v2h-2zM196 19h4v4h-4zM150 121h3v2h-3zM128 4h2v3h-2zM265 26h3v3h-3zM135 83h4v2h-4zM72 26h2v3h-2zM249 95h3v3h-3zM118 56h2v3h-2zM219 1h4v3h-4zM5 104h2v4h-2zM275 49h2v2h-2zM11 7h2v2h-2zM233 81h3v3h-3zM199 4h3v3h-3zM4 57h2v3h-2zM116 123h4v4h-4zM151 65h4v2h-4zM213 53h4v4h-4zM232 102h4v4h-4zM214 84h2v3h-2zM270 123h4v3h-4zM118 124h3v2h-3zM245 105h2v3h-2zM257 10h2v4h-2zM268 117h3v4h-3zM133 48h4v4h-4zM106 123h3v3h-3zM196 47h3v2h-3zM72 126h2v2h-2zM196 89h4v4h-4zM103 92h3v2h-3zM183 85h2v3h-2zM65 87h4v3h-4zM221 10h4v3h-4zM45 40h2v4h-2zM150 121h3v3h-3zM190 20h3v2h-3zM150 22h4v3h-4zM133 31h3v3h-3zM159 129h4v2h-4zM199 33h2v4h-2zM204 75h4v2h-4zM1 12h4v4h-4zM256 130h2v4h-2zM253 76h4v3h-4zM193 17h2v3h-2zM54 69h2v3h-2zM131 49h3v3h-3zM215 27h2v3h-2zM215 33h3v2h-3zM18 47h2v4h-2zM149 14h2v3h-2zM183 24h2v3h-2zM5 30h2v2h-2zM152 72h2v3h-2zM47 124h4v3h-4zM127 66h2v3h-2zM181 93h4v2h-4zM159 9h2v2h-2zM39 40h4v3h-4zM231 122h4v3h-4zM179 4h4v4h-4zM43 105h2v4h-2zM7 80h2v2h-2zM133 31h2v2h-2zM7 94h2v3h-2zM215 30h2v4h-2zM142 78h4v2h-4zM82 97h4v2h-4zM135 45h3v3h-3zM81 83h3v2h-3zM74 108h3v3h-3zM230 88h4v3h-4zM5 121h2v2h-2zM109 62h2v3h-2zM88 60h3v3h-3zM121 98h4v2h-4zM103 41h3v3h-3zM115 41h2v4h-2zM138 17h2v3h-2zM90 71h4v2h-4zM128 30h4v2h-4zM129 99h2v2h-2zM92 125h3v4h-3zM290 123h2v4h-2zM235 18h3v2h-3zM4 33h4v2h-4zM88 104h2v3h-2zM201 25h3v3h-3zM11 11h4v2h-4zM247 87h2v2h-2zM28 123h3v2h-3zM260 16h4v2h-4zM270 90h2v2h-2zM131 9h2v4h-2zM184 53h4v3h-4zM110 64h3v2h-3zM103 61h2v3h-2zM181 43h3v4h-3zM135 72h4v4h-4zM70 50h2v3h-2zM225 40h2v2h-2zM27 87h2v2h-2zM253 33h2v2h-2zM243 37h4v3h-4zM140 125h2v4h-2zM125 3h4v3h-4zM91 26h3v3h-3zM194 74h3v2h-3zM293 95h2v3h-2zM261 31h4v3h-4zM13 63h2v3h-2zM222 17h4v4h-4zM4 58h4v3h-4zM212 45h4v3h-4zM282 39h4v3h-4zM259 122h2v3h-2zM270 45h3v4h-3zM169 58h2v3h-2zM139 43h2v4h-2zM99 19h2v3h-2zM285 123h4v2h-4zM291 96h2v2h-2zM279 109h4v2h-4zM123 5h4v3h-4zM204 95h4v2h-4zM190 101h3v3h-3zM109 126h2v2h-2zM268 126h3v2h-3zM237 87h3v4h-3zM38 90h2v3h-2zM96 79h2v3h-2zM164 22h2v3h-2zM78 119h4v3h-4zM45 47h2v4h-2zM287 107h2v4h-2zM240 67h3v2h-3zM99 89h3v2h-3zM7 74h4v2h-4zM117 101h4v3h-4zM30 26h4v4h-4zM192 44h2v3h-2zM176 102h2v2h-2zM283 66h2v4h-2zM178 59h4v2h-4zM162 82h4v3h-4zM29 114h2v3h-2zM102 85h4v3h-4zM238 44h2v3h-2zM92 7h4v3h-4zM40 9h4v3h-4zM57 125h2v4h-2zM83 119h2v4h-2zM26 120h2v2h-2zM111 114h2v4h-2zM107 115h4v3h-4zM176 86h2v3h-2zM3 62h4v2h-4zM26 52h2v3h-2zM170 69h3v3h-3zM64 56h3v3h-3zM175 39h4v3h-4zM108 79h3v2h-3zM173 107h2v3h-2zM75 48h3v2h-3zM247 410h3v2h-3zM238 417h4v3h-4zM235 416h3v2h-3zM215 434h4v4h-4zM281 412h2v2h-2zM264 436h2v4h-2zM210 430h4v3h-4zM275 385h3v2h-3zM196 390h4v4h-4zM289 406h2v3h-2zM195 438h3v3h-3zM233 431h3v3h-3zM286 406h2v2h-2zM207 388h4v3h-4zM198 387h2v4h-2zM221 413h2v2h-2zM217 401h4v3h-4zM252 427h3v2h-3zM273 392h2v2h-2zM258 431h2v2h-2zM260 420h2v3h-2zM215 429h4v2h-4zM239 438h2v2h-2zM208 400h3v3h-3zM215 395h3v3h-3zM282 420h2v2h-2zM286 386h4v3h-4zM250 439h4v2h-4zM239 404h2v3h-2zM217 403h2v3h-2zM228 387h4v3h-4zM288 410h4v4h-4zM242 410h2v2h-2zM202 406h3v2h-3zM282 409h2v3h-2zM200 390h2v2h-2zM230 424h2v3h-2zM289 398h3v2h-3zM280 391h4v4h-4zM271 413h2v2h-2zM252 438h3v2h-3zM277 416h2v2h-2zM221 414h3v4h-3zM216 399h2v3h-2zM233 405h3v2h-3zM244 387h3v4h-3zM280 423h2v2h-2zM278 427h3v4h-3zM243 389h4v2h-4zM265 410h2v3h-2zM202 400h4v2h-4zM200 423h3v3h-3zM215 417h2v3h-2zM225 431h3v3h-3zM241 392h4v3h-4zM229 387h4v4h-4zM259 418h4v2h-4zM274 388h2v3h-2zM231 400h4v2h-4zM283 403h2v3h-2zM266 416h3v2h-3zM231 411h4v2h-4zM265 415h4v4h-4zM230 406h4v3h-4zM282 415h4v3h-4zM246 411h2v2h-2zM285 397h3v2h-3zM243 419h2v2h-2zM224 411h3v3h-3zM274 421h3v3h-3zM280 416h4v2h-4zM249 403h2v3h-2zM287 406h3v3h-3zM277 397h4v2h-4zM247 386h3v3h-3zM240 406h4v3h-4zM256 397h4v2h-4zM204 405h4v4h-4zM240 407h4v2h-4zM205 390h3v4h-3zM217 411h4v2h-4zM268 427h2v2h-2zM258 390h3v2h-3zM199 438h4v3h-4zM196 424h4v3h-4zM242 411h4v2h-4zM218 433h3v4h-3zM290 399h4v4h-4zM257 391h3v3h-3zM281 389h4v2h-4zM278 423h4v3h-4zM245 408h3v3h-3zM205 429h2v4h-2zM259 431h4v4h-4zM285 392h3v4h-3zM216 438h3v4h-3zM208 423h4v4h-4zM218 411h2v4h-2zM259 429h2v2h-2zM271 413h3v3h-3zM233 421h4v2h-4zM245 417h3v3h-3zM231 423h4v2h-4zM285 421h3v3h-3zM249 388h2v3h-2zM209 417h2v4h-2zM278 385h2v4h-2zM199 420h4v2h-4zM230 413h3v4h-3zM223 424h2v4h-2zM253 434h3v3h-3zM206 435h2v4h-2zM247 413h2v2h-2zM264 418h2v3h-2zM267 406h4v2h-4zM218 416h4v2h-4zM271 393h2v3h-2zM288 436h3v2h-3zM201 418h2v2h-2zM243 408h2v2h-2zM236 429h4v2h-4zM204 422h2v2h-2zM236 395h3v3h-3zM277 421h4v3h-4zM285 388h4v4h-4zM224 423h2v2h-2zM222 393h3v2h-3zM329 411h3v3h-3zM337 405h4v3h-4zM326 422h3v2h-3zM364 413h4v3h-4zM319 429h2v4h-2zM375 407h2v2h-2zM319 413h2v2h-2zM314 436h2v2h-2zM310 407h3v2h-3zM318 406h3v2h-3zM304 439h2v4h-2zM353 432h4v4h-4zM304 402h3v2h-3zM362 407h3v3h-3zM304 417h2v3h-2zM351 432h2v3h-2zM360 415h3v3h-3zM341 430h2v3h-2zM328 405h4v4h-4zM362 417h3v2h-3zM372 408h4v2h-4zM315 401h4v3h-4zM316 436h2v2h-2zM295 439h4v3h-4zM361 430h2v3h-2zM353 412h2v2h-2zM314 429h3v3h-3zM348 408h3v2h-3zM374 431h4v3h-4zM327 438h4v2h-4zM364 411h3v3h-3zM367 422h4v3h-4zM354 424h2v4h-2zM378 413h3v3h-3zM376 439h4v2h-4zM309 426h2v2h-2zM340 405h3v4h-3zM339 405h4v3h-4zM368 402h4v4h-4zM368 435h2v2h-2zM346 432h2v4h-2zM363 413h4v2h-4zM308 430h4v2h-4zM349 438h4v3h-4zM374 427h2v2h-2zM302 404h3v4h-3zM333 405h4v2h-4zM300 425h3v2h-3zM361 406h2v2h-2zM345 430h2v2h-2zM344 406h3v2h-3zM327 407h4v3h-4zM363 411h4v2h-4zM291 432h4v3h-4zM313 424h2v2h-2zM324 416h4v3h-4zM311 409h4v2h-4zM335 410h3v3h-3zM296 435h2v3h-2zM352 412h2v2h-2zM323 420h4v2h-4zM350 413h2v2h-2zM340 416h3v4h-3zM368 418h2v3h-2zM368 415h4v2h-4zM341 414h3v4h-3zM337 413h4v3h-4zM362 402h3v2h-3z" fill="#e6e5e5"/><rect x="290" y="0" width="320" height="45" fill="#c8d7a9"/><polygon points="200,0 293,0 293,82 277,75 251,72 229,67 215,70 205,62 203,48 202,35 210,28 206.5,18" fill="#c8d7a9"/><polygon points="200,0 259,0 255,10 240,17 222,18 206,14" fill="#b4d3a2"/><polygon points="203,35 213,33 216,40 209,46 202,44" fill="#b9ae92"/><polygon points="246,42 256,41 257,55 255,67 246,66 244,55" fill="#c6c3c3"/><polygon points="258,62 266,58 269,68 260,72" fill="#e6efc0"/><ellipse cx="276" cy="31" rx="8" ry="7.5" fill="#aad3df"/><polyline points="277,0 277,17 285,22 285,35 280,45 283,60 285,80" fill="none" stroke="#e8eef0" stroke-width="1.5"/><polyline points="205,70 229,66.8 251.2,72 276.9,75.4 293,82" fill="none" stroke="#a6d0e0" stroke-width="1.6"/><polyline points="293,30 321,13 375,1 380,0" fill="none" stroke="#e8ecec" stroke-width="1.6"/><polygon points="369,31 372,22 385,20 398,24 400,31" fill="#cfcbd6"/><polygon points="375,8 380,6 385,12 383,20 376,18" fill="#d4eec0"/><polygon points="399,7 405,5 406,22 400,23" fill="#a59a7c"/><polyline points="426,0 432,12 437,31" fill="none" stroke="#8c8c80" stroke-width="1.2" stroke-dasharray="1.5 2"/><polyline points="462,0 462,31" fill="none" stroke="#8c8c80" stroke-width="1.2" stroke-dasharray="1.5 2"/><polygon points="483,31 490,20 500,17 510,22 522,26 525,31" fill="#d2d0d4"/><polygon points="507,0 607,0 607,31 575,31 540,15 512,2" fill="#bcd7a2"/><polyline points="512,0 540,15 575,31" fill="none" stroke="#bfe0e8" stroke-width="1.6"/><polyline points="519,31 533,24 540,20 538,10 548,4 554,1 562,5 564,14 571,12 582,14 599,13 607,8" fill="none" stroke="#f0ea88" stroke-width="2"/><polygon points="0,0 13,0 12,12 8,28 0,31" fill="#cfe0b6"/><polygon points="36,6 44,4 47,22 40,25" fill="#d3e6bd"/><polygon points="47,0 60,0 58,20 50,24" fill="#d3e6bd"/><polygon points="57,0 78,0 95,12 84,21 60,22" fill="#c9ddb0"/><polygon points="63,14 66,9 69,14" fill="#d98e50"/><polygon points="54,18 85,17 88,23 56,24" fill="#b5d6dc"/><polygon points="266,111 293,108 293,128 268,128" fill="#cfe6c0"/><ellipse cx="284" cy="122" rx="5" ry="4" fill="#aad3df"/><polygon points="0,40 9,40 20,38.5 41,38.5 54,43 60,48 66,50.5 71,50 81,52 84,60 82.8,68 95,75 113,84.7 126.6,97 128,108 131,116 138,128 160,160 203,385 203,439 0,439" fill="#aad3df"/><polygon points="0,41 22,42 22,44 0,47" fill="#d8d6d6"/><polygon points="56,55 72,58 80,66 74,64 58,59" fill="#d8d6d6"/><polygon points="87,94 106,98 126,104 128,108 119,110 104,106 87,97" fill="#d8d6d6"/><polygon points="108,111 125,113 133,120 136,128 118,128" fill="#d8d6d6"/><polyline points="0,49 22,44 22,41 42,41 57,52 46,58 68,78 60,86 100,121 111,128" fill="none" stroke="#b48fb8" stroke-width="1.6" opacity="0.8"/><polyline points="48,51 43,60 52,80 62,101 73,121" fill="none" stroke="#6b8de0" stroke-width="1" stroke-dasharray="4 3"/><polyline points="0,269.4 46,271.5" fill="none" stroke="#7fbf94" stroke-width="1"/><polygon points="0,319.7 10,316 15,311.7 20,309.4 30,307 40,308 46,310.5 46,324 35,322 25,324 15,330 5,331 0,328.8" fill="#d9e5c6" stroke="#7b8f72" stroke-width="2.4" stroke-linejoin="round" filter="url(#rough)"/><polygon points="46,335.7 35,339 25,341.4 15,349 5,358.5 0,363 0,374.5 5,370 15,363 25,356 35,348 46,342.5" fill="#d9e5c6" stroke="#7b8f72" stroke-width="2.4" stroke-linejoin="round" filter="url(#rough)"/><polygon points="32,313 34,309 36,313" fill="#d98e50"/><polyline points="22,332 23,340 35,338 44,333" fill="none" stroke="#a890cc" stroke-width="1"/><polyline points="89.0,385.0 86.5,384.9 85.5,385.6 86.6,387.2 88.5,389.2 89.6,390.8 88.6,391.4 86.1,391.4 83.5,391.3 82.6,391.9 83.6,393.5 85.6,395.5 86.6,397.1 85.7,397.8 83.1,397.7 80.6,397.6 79.6,398.3 80.7,399.9 82.6,401.9 83.7,403.5 82.7,404.1 80.2,404.1 77.6,404.0 76.7,404.6 77.7,406.2 79.7,408.2 80.7,409.8 79.8,410.5 77.2,410.4 74.7,410.3 73.7,411.0 74.8,412.6 76.7,414.6 77.8,416.2 76.8,416.8 74.3,416.8 71.7,416.7 70.8,417.3 71.9,418.9 73.8,420.9 74.8,422.5 73.9,423.2 71.4,423.1 68.8,423.0 67.9,423.7 68.9,425.3 70.9,427.3 71.9,428.9 71.0,429.5 68.4,429.5 65.9,429.4 64.9,430.1 66.0,431.6 67.9,433.6 69.0,435.2 68.0,435.9 65.5,435.8 62.9,435.7 62.0,436.4 63.0,438.0" fill="none" stroke="#7088ee" stroke-width="1.4"/><polyline points="89.0,385.0 90.7,386.9 90.8,388.0 88.9,388.3 86.1,388.1 84.2,388.3 84.4,389.5 86.1,391.4 87.8,393.2 87.9,394.4 86.0,394.6 83.2,394.4 81.3,394.7 81.4,395.8 83.1,397.7 84.8,399.6 84.9,400.7 83.0,401.0 80.3,400.8 78.4,401.0 78.5,402.2 80.2,404.1 81.9,405.9 82.0,407.1 80.1,407.3 77.3,407.1 75.4,407.4 75.5,408.5 77.2,410.4 78.9,412.3 79.1,413.5 77.2,413.7 74.4,413.5 72.5,413.7 72.6,414.9 74.3,416.8 76.0,418.7 76.1,419.8 74.2,420.0 71.4,419.8 69.5,420.1 69.6,421.2 71.4,423.1 73.1,425.0 73.2,426.2 71.3,426.4 68.5,426.2 66.6,426.4 66.7,427.6 68.4,429.5 70.1,431.4 70.2,432.5 68.3,432.7 65.6,432.5 63.7,432.8 63.8,433.9 65.5,435.8 67.2,437.7 67.3,438.9 65.4,439.1" fill="none" stroke="#7088ee" stroke-width="1.4"/><polyline points="105,386 105,439" fill="none" stroke="#6b8de0" stroke-width="1.2" stroke-dasharray="5 4"/><polyline points="143,386 175,439" fill="none" stroke="#6b8de0" stroke-width="1.2" stroke-dasharray="5 4"/><polygon points="203,385 293,385 293,439 203,439 206,430 204,420 207,410 204,400 206,392" fill="#dfdedd" opacity="0"/><path d="M202 385 q-4 4 0 7 q4 3 -1 7 q-3 4 1 7 q4 3 -1 7 q-4 4 0 7 q4 3 -1 7 q-3 4 1 7 q3 3 0 7" fill="none" stroke="#789683" stroke-width="2.6" opacity="0.9" filter="url(#rough)"/><polyline points="206,385 207,439" fill="none" stroke="#cfe6c4" stroke-width="3"/><polygon points="212.6,391.5 232.6,391.5 231.4,402.8 226.3,414 213.8,414" fill="#cbe8c0"/><polyline points="243.9,384 238.9,396.5 231.4,402.8 227.6,409 226.3,416.6 210,434" fill="none" stroke="#fafafa" stroke-width="1.5"/><polyline points="255,384 257.7,407.8 257.7,424 261.4,439" fill="none" stroke="#fafafa" stroke-width="1.5"/><polyline points="257.7,407.8 270.2,402.8" fill="none" stroke="#fafafa" stroke-width="1.3"/><polyline points="257.7,420 246.4,430.4" fill="none" stroke="#fafafa" stroke-width="1.3"/><polyline points="280.2,400.3 293,419" fill="none" stroke="#fafafa" stroke-width="1.3"/><polyline points="206.3,385 210,399 212,416.6 226.3,417.8 232.6,420.3 248.9,439" fill="none" stroke="#f0f0a0" stroke-width="3"/><polyline points="265.2,384 271.5,402.8 277.7,421.6 287.7,439" fill="none" stroke="#f3c48a" stroke-width="3"/><polyline points="285.2,384 281.5,396.5 270.2,402.8" fill="none" stroke="#f0f0a0" stroke-width="2.6"/><polyline points="277.7,424 262.7,432.9 258,439" fill="none" stroke="#f0f0a0" stroke-width="2.6"/><polygon points="335,401 607,401 607,439 335,439" fill="#b2cf9f"/><polygon points="331.6,401 374.7,401 376.9,412 370.3,422 353.7,425 348,439 338,439 335,419.8" fill="#d2d3cc" stroke="#a9cc9a" stroke-width="2"/><polygon points="320.6,426.4 330,426 331,439 321,439" fill="#cfe9bd"/><polygon points="335,419.8 342.7,419.8 342.7,434 336,434" fill="#cfe9bd"/><polygon points="354.8,430.8 366,430 368,439 356,439" fill="#dde3d6"/><polyline points="317.3,401 325,412 330.5,425.3 333.8,439" fill="none" stroke="#eeee98" stroke-width="2.8"/><polyline points="297.4,401 304,414.2 311.8,423 312.9,430.8 318.4,432 321.7,425.3 328.3,423" fill="none" stroke="#fafafa" stroke-width="1.4"/><polyline points="293,417.6 299.6,425.3 312.9,430.8" fill="none" stroke="#fafafa" stroke-width="1.3"/><polyline points="307.3,406 297.4,438.5" fill="none" stroke="#eab88a" stroke-width="1.5" stroke-dasharray="2 2"/><polygon points="392.5,406 405,404 420,410 436,418 437,428 425,426 410,416 395,412" fill="#e7e2dc"/><path d="M376 439 Q388 432 400 436" fill="none" stroke="#ecd48c" stroke-width="1.8"/><polyline points="473,439 495,425 510,412 524,401" fill="none" stroke="#98c894" stroke-width="1.8"/><polyline points="560,401 545,420 540,439" fill="none" stroke="#98c894" stroke-width="1.5"/><polyline points="452,424 490,417 495,407" fill="none" stroke="#c49a6c" stroke-width="0.8"/><polygon points="452,424 455,418 458,424" fill="#d98e50"/><polygon points="494,409 497,403 500,409" fill="#d98e50"/><polygon points="539,439 546.4,421.8 553.7,413.6 569.2,410.8 574.7,412.7 574.7,420.9 581,423.6 586.5,431 595.6,439" fill="#ecdede"/><polyline points="553,425 565,418 572,416" fill="none" stroke="#c8c0c0" stroke-width="0.8"/><polyline points="564.6,401 574.7,412.7" fill="none" stroke="#8fbf86" stroke-width="1.5"/><text x="518" y="434.3" font-family="Liberation Sans" font-style="italic" font-size="11" fill="#a23c3c" textLength="69" lengthAdjust="spacingAndGlyphs">Camp militaire</text><polyline points="176,78 174,86 179,111 186,128" fill="none" stroke="#b0d4e2" stroke-width="1.5"/><polyline points="10,0 15.5,4.6 25.5,14 31,20 38.6,24.7 54,25.5 108,29.4 117.5,34 131,46.4 148,68 170.8,78.8 182.8,92.5 194.7,102.8 203.3,111.3 213.6,123.3 218,128" fill="none" stroke="#8a8a8a" stroke-width="1.8"/><polyline points="0,37 4.6,34.8 10.8,30 18.5,26.3 31,24.7" fill="none" stroke="#8a8a8a" stroke-width="1.5"/><polyline points="177,20 185,50 198,60 217,72 223.8,80.5 225.5,85.7 235.8,97.6 241,107.9 249.5,113 256.3,119.9 258,128" fill="none" stroke="#8a8a8a" stroke-width="1.8"/><polyline points="10,0 15.5,4.6 25.5,14 31,20" fill="none" stroke="#6a6a6a" stroke-width="2.4" stroke-dasharray="4 2"/><polyline points="111,0 114.4,18.5 120,30 126.9,37" fill="none" stroke="#6a6a6a" stroke-width="2.2" stroke-dasharray="4 2"/><polygon points="139.7,37 155,34 155,57.8 141,51.5" fill="#cfe9c2"/><polygon points="134,30 147,24 150,34 143,42 134,39" fill="#cbcfbf"/><polyline points="130,30.7 134.9,24.4 147.6,21.2 155,19.6" fill="none" stroke="#fff" stroke-width="1.4"/><polyline points="130,30.7 133.3,40.3 142.8,43.5 149.2,37" fill="none" stroke="#fff" stroke-width="1.4"/><polyline points="112.5,49 123.7,49.9 126.9,53" fill="none" stroke="#fff" stroke-width="1.3"/><polyline points="157,85.7 148.5,106.2 157,114.7 162.2,128" fill="none" stroke="#fff" stroke-width="1.3"/><polyline points="184.5,94.2 182.8,118.2 200,114.7" fill="none" stroke="#fff" stroke-width="1.3"/><polyline points="268,112 280,105 290,110" fill="none" stroke="#fff" stroke-width="1.3"/><polyline points="182,0 177,10 176,21 179,41 189,53 199.9,60 205,75.4 217,85.7 229,94.2 235.8,102.8 239.2,111.3 246,114.7 259.8,121.6 273.4,128.4" fill="none" stroke="#d9d98c" stroke-width="4.0" stroke-linejoin="round" stroke-linecap="round"/><polyline points="182,0 177,10 176,21 179,41 189,53 199.9,60 205,75.4 217,85.7 229,94.2 235.8,102.8 239.2,111.3 246,114.7 259.8,121.6 273.4,128.4" fill="none" stroke="#f3f5b4" stroke-width="2.6" stroke-linejoin="round" stroke-linecap="round"/><polyline points="123.7,30.7 128.5,35.5 133.3,43.5 136.5,48.3" fill="none" stroke="#d9d98c" stroke-width="4.8" stroke-linejoin="round" stroke-linecap="round"/><polyline points="123.7,30.7 128.5,35.5 133.3,43.5 136.5,48.3" fill="none" stroke="#f3f5b4" stroke-width="3.4" stroke-linejoin="round" stroke-linecap="round"/><polyline points="140,75.4 153.7,77 160.5,80.5 169,77 182.8,89 191.3,84 206.7,80.5" fill="none" stroke="#d9d98c" stroke-width="3.8" stroke-linejoin="round" stroke-linecap="round"/><polyline points="140,75.4 153.7,77 160.5,80.5 169,77 182.8,89 191.3,84 206.7,80.5" fill="none" stroke="#f3f5b4" stroke-width="2.4" stroke-linejoin="round" stroke-linecap="round"/><polyline points="201.6,128 200,109.6 205,106.2 217,109.6 232.4,114.7 239.2,118.2 235.8,128.4" fill="none" stroke="#d9d98c" stroke-width="3.8" stroke-linejoin="round" stroke-linecap="round"/><polyline points="201.6,128 200,109.6 205,106.2 217,109.6 232.4,114.7 239.2,118.2 235.8,128.4" fill="none" stroke="#f3f5b4" stroke-width="2.4" stroke-linejoin="round" stroke-linecap="round"/><polyline points="0,0" fill="none" stroke="#d9d98c" stroke-width="1.4" stroke-linejoin="round" stroke-linecap="round"/><polyline points="0,0" fill="none" stroke="#f3f5b4" stroke-width="0" stroke-linejoin="round" stroke-linecap="round"/><polyline points="0,39.4 9.3,38.6 20,37 41.7,37 54,41.7 60,46 65,48.5 70.5,48.4 81.5,50.5 87,62.8 97.9,61.4 107.5,64 118.4,75 126.6,86 129,95 131,106 134.7,123 136,128" fill="none" stroke="#e2a96a" stroke-width="4.6" stroke-linejoin="round" stroke-linecap="round"/><polyline points="0,39.4 9.3,38.6 20,37 41.7,37 54,41.7 60,46 65,48.5 70.5,48.4 81.5,50.5 87,62.8 97.9,61.4 107.5,64 118.4,75 126.6,86 129,95 131,106 134.7,123 136,128" fill="none" stroke="#f7cd94" stroke-width="3.2" stroke-linejoin="round" stroke-linecap="round"/><polyline points="137.6,0 126.7,18.5 122,27.8 114.4,38.6 111.3,46.4 111.5,65.5" fill="none" stroke="#e2a96a" stroke-width="4.4" stroke-linejoin="round" stroke-linecap="round"/><polyline points="137.6,0 126.7,18.5 122,27.8 114.4,38.6 111.3,46.4 111.5,65.5" fill="none" stroke="#f7cd94" stroke-width="3" stroke-linejoin="round" stroke-linecap="round"/><polyline points="160,0 160,30 164,60 165.7,85.7 169,104.5 176,118.2 177.6,128" fill="none" stroke="#e2a96a" stroke-width="4.4" stroke-linejoin="round" stroke-linecap="round"/><polyline points="160,0 160,30 164,60 165.7,85.7 169,104.5 176,118.2 177.6,128" fill="none" stroke="#f7cd94" stroke-width="3" stroke-linejoin="round" stroke-linecap="round"/><polyline points="65,0 72.6,4.6 85,12.4 95,16.4 107.8,18.8 117.3,24.4 123.7,34 128.5,43.5 133.3,54.7 137.3,64.2 134.9,73.8 131.7,80 131,92.6 136.4,111 139,128" fill="none" stroke="#d46882" stroke-width="5.4" stroke-linejoin="round" stroke-linecap="round"/><polyline points="65,0 72.6,4.6 85,12.4 95,16.4 107.8,18.8 117.3,24.4 123.7,34 128.5,43.5 133.3,54.7 137.3,64.2 134.9,73.8 131.7,80 131,92.6 136.4,111 139,128" fill="none" stroke="#e88c9c" stroke-width="4" stroke-linejoin="round" stroke-linecap="round"/><polyline points="171.5,0 174.4,14.8 177.4,38.5 179.3,60 191.3,73.7 199.9,85.7 210.1,102.8 215.3,116.5 223.8,128.4" fill="none" stroke="#d46882" stroke-width="5.4" stroke-linejoin="round" stroke-linecap="round"/><polyline points="171.5,0 174.4,14.8 177.4,38.5 179.3,60 191.3,73.7 199.9,85.7 210.1,102.8 215.3,116.5 223.8,128.4" fill="none" stroke="#e88c9c" stroke-width="4" stroke-linejoin="round" stroke-linecap="round"/><text x="10" y="36" font-family="Liberation Sans" font-size="10.3" fill="none" stroke="#ffffff" stroke-width="2.2" stroke-opacity="0.6" stroke-linejoin="round" >16e Arrondissement</text><text x="10" y="36" font-family="Liberation Sans" font-size="10.3" fill="#545454" stroke="#545454" stroke-width="0.35" >16e Arrondissement</text><text x="136" y="69.2" font-family="Liberation Sans" font-size="10.3" fill="none" stroke="#ffffff" stroke-width="2.2" stroke-opacity="0.6" stroke-linejoin="round" >15e Arrondissement</text><text x="136" y="69.2" font-family="Liberation Sans" font-size="10.3" fill="#545454" stroke="#545454" stroke-width="0.35" >15e Arrondissement</text><text x="203" y="93.3" font-family="Liberation Sans" font-size="10.3" fill="none" stroke="#ffffff" stroke-width="2.2" stroke-opacity="0.6" stroke-linejoin="round" >14e Arrondissement</text><text x="203" y="93.3" font-family="Liberation Sans" font-size="10.3" fill="#545454" stroke="#545454" stroke-width="0.35" >14e Arrondissement</text><text x="166.5" y="18.3" font-family="Liberation Sans" font-size="9.5" fill="none" stroke="#ffffff" stroke-width="2.2" stroke-opacity="0.6" stroke-linejoin="round" font-style="italic">33</text><text x="166.5" y="18.3" font-family="Liberation Sans" font-size="9.5" fill="#c8385e" stroke="#c8385e" stroke-width="0.35" font-style="italic">33</text><text x="127.5" y="56.6" font-family="Liberation Sans" font-size="9.5" fill="none" stroke="#ffffff" stroke-width="2.2" stroke-opacity="0.6" stroke-linejoin="round" font-style="italic">6 b</text><text x="127.5" y="56.6" font-family="Liberation Sans" font-size="9.5" fill="#c8385e" stroke="#c8385e" stroke-width="0.35" font-style="italic">6 b</text><text x="204" y="101" font-family="Liberation Sans" font-size="9.5" fill="none" stroke="#ffffff" stroke-width="2.2" stroke-opacity="0.6" stroke-linejoin="round" font-style="italic">34</text><text x="204" y="101" font-family="Liberation Sans" font-size="9.5" fill="#c8385e" stroke="#c8385e" stroke-width="0.35" font-style="italic">34</text><text x="208.4" y="121.6" font-family="Liberation Sans" font-size="9.5" fill="none" stroke="#ffffff" stroke-width="2.2" stroke-opacity="0.6" stroke-linejoin="round" font-style="italic">34</text><text x="208.4" y="121.6" font-family="Liberation Sans" font-size="9.5" fill="#c8385e" stroke="#c8385e" stroke-width="0.35" font-style="italic">34</text><rect x="45.4" y="128.2" width="315.23" height="256.85" fill="#e25689"/><rect x="138.80" y="256.62" width="11.68" height="11.68" fill="#ffff00"/><path d="M45.40 128.2V385.05M57.08 128.2V385.05M68.75 128.2V385.05M80.43 128.2V385.05M92.10 128.2V385.05M103.78 128.2V385.05M115.45 128.2V385.05M127.12 128.2V385.05M138.80 128.2V385.05M150.47 128.2V385.05M162.15 128.2V385.05M173.83 128.2V385.05M185.50 128.2V385.05M197.18 128.2V385.05M208.85 128.2V385.05M220.53 128.2V385.05M232.20 128.2V385.05M243.88 128.2V385.05M255.55 128.2V385.05M267.23 128.2V385.05M278.90 128.2V385.05M290.57 128.2V385.05M302.25 128.2V385.05M313.93 128.2V385.05M325.60 128.2V385.05M337.27 128.2V385.05M348.95 128.2V385.05M360.62 128.2V385.05M45.4 128.20H360.62M45.4 139.88H360.62M45.4 151.55H360.62M45.4 163.22H360.62M45.4 174.90H360.62M45.4 186.57H360.62M45.4 198.25H360.62M45.4 209.93H360.62M45.4 221.60H360.62M45.4 233.27H360.62M45.4 244.95H360.62M45.4 256.62H360.62M45.4 268.30H360.62M45.4 279.98H360.62M45.4 291.65H360.62M45.4 303.32H360.62M45.4 315.00H360.62M45.4 326.68H360.62M45.4 338.35H360.62M45.4 350.02H360.62M45.4 361.70H360.62M45.4 373.38H360.62M45.4 385.05H360.62" stroke="#48182c" stroke-width="1.4" fill="none"/></svg>
<div id="panel">
<div class="a" style="left:7px;top:-4px;width:294px;height:16px;background:#fff;border:1px solid #bcbcbc;border-radius:2px"></div>
<svg class="a" style="left:16px;top:-6px" width="14" height="12"><circle cx="5" cy="3" r="3.6" fill="none" stroke="#8a8a8a" stroke-width="1.2"/><path d="M7.8 5.8 L11 9" stroke="#8a8a8a" stroke-width="1.4"/></svg>
<div class="a" style="left:37px;top:-11px;font-size:14.7px;line-height:18px;color:#222">grid</div>
<svg class="a" style="left:283px;top:-2px" width="14" height="6"><path d="M3 0H13V4H3L0 0Z" fill="#8e8e8e"/></svg>
<div class="a" style="left:7px;top:12px;width:284px;height:430px;background:#fff;border:1px solid #c2c2c2"></div>
<div class="a" style="left:8px;top:13px;width:282px;height:17px;background:linear-gradient(#fafafa,#e4e4e4)"></div>
<svg class="a" style="left:14px;top:19px" width="10" height="6"><path d="M0.5 0.5H8.5L4.5 4.5Z" fill="#454545"/></svg>
<svg class="a" style="left:31px;top:14px" width="16" height="16"><circle cx="8" cy="8" r="6.6" fill="#f4f4f4" stroke="#8a8a8a" stroke-width="1.1"/><path d="M7.6 3.5V8.3L10.8 10.6" fill="none" stroke="#777" stroke-width="1.1"/></svg>
<div class="a" style="left:53px;top:14px;font-size:14.9px;line-height:17px;color:#1b1b1b;white-space:nowrap;letter-spacing:0.15px">Recently used</div>
<div class="a" style="left:290px;top:12px;width:11px;height:430px;background:#e6e6e6;border-left:1px solid #d0d0d0"></div>
<div class="a" style="left:290px;top:12px;width:11px;height:15px;background:#f4f4f4;border-left:1px solid #d0d0d0;border-bottom:1px solid #d0d0d0"></div>
<svg class="a" style="left:292px;top:16px" width="9" height="6"><path d="M0.5 5L4.5 1L8.5 5Z" fill="#404040"/></svg>
<div class="a" style="left:52px;top:391px;font-size:15.5px;line-height:17px;color:#1b1b1b;white-space:nowrap">Raster (r.*)</div>
<svg class="a" style="left:73px;top:410px" width="14" height="14" viewBox="0 0 14 14"><path d="M7 0.8L13 6.8L7 12.8L1 6.8Z" fill="#e8f4e0" stroke="#5a7a4a" stroke-width="0.9"/><path d="M3.5 5.5L7 9.5L10.5 5.5" fill="none" stroke="#3e9a2e" stroke-width="1.8"/><path d="M2 13.2H12" stroke="#333" stroke-width="0.9"/></svg>
<div class="a" style="left:93px;top:409px;font-size:15.5px;line-height:17px;color:#1b1b1b;white-space:nowrap">r.out.gridatb</div>
<svg class="a" style="left:73px;top:428px" width="14" height="14" viewBox="0 0 14 14"><path d="M7 0.8L13 6.8L7 12.8L1 6.8Z" fill="#e8f4e0" stroke="#5a7a4a" stroke-width="0.9"/><path d="M3.5 5.5L7 9.5L10.5 5.5" fill="none" stroke="#3e9a2e" stroke-width="1.8"/><path d="M2 13.2H12" stroke="#333" stroke-width="0.9"/></svg>
<div class="a" style="left:93px;top:427px;font-size:15.5px;line-height:17px;color:#1b1b1b;white-space:nowrap">r.resamp.interp</div>
</div>
<div id="dlgshadow"></div><div id="dlg">
<div id="title"><div class="t">Grid — Features Total: 594, Filtered: 594, Selected: 1</div>
<div class="wb" style="left:520px"></div>
<div class="wb" style="left:554px"></div>
<div class="wb" style="left:588px"></div>
<div class="a" style="left:527px;top:19px;width:8px;height:2px;background:#2f2f2f"></div>
<div class="a" style="left:561px;top:14px;width:8.5px;height:8.5px;border:1.5px solid #2f2f2f"></div>
<svg class="a" style="left:594px;top:13px" width="10" height="10" viewBox="0 0 10 10"><path d="M1 1L9 9M9 1L1 9" stroke="#2f2f2f" stroke-width="1.5"/></svg>
</div>
<div id="tb"></div>
<div id="tbl">
<div class="hd" style="left:0px;width:102px;letter-spacing:1.1px;padding-left:5.10px">left</div>
<div class="hd" style="left:102px;width:100px;letter-spacing:0.9px;padding-left:2.90px">top</div>
<div class="hd" style="left:202px;width:100px;letter-spacing:0.8px;padding-left:2.80px">right</div>
<div class="hd" style="left:302px;width:100px;letter-spacing:1.0px;padding-left:3.00px">bottom</div>
<div class="hd" style="left:402px;width:100px;letter-spacing:0.25px;padding-left:2.25px">row_index</div>
<div class="hd" style="left:502px;width:100px;letter-spacing:0.12px;padding-left:2.12px">col_index</div>
<div class="c" style="left:0px;top:21px;width:102px;background:#f7f7f7">595382,3928</div>
<div class="c" style="left:102px;top:21px;width:100px;background:#f7f7f7">5359690,3…</div>
<div class="c" style="left:202px;top:21px;width:100px;background:#f7f7f7">595882,3928</div>
<div class="c" style="left:302px;top:21px;width:100px;background:#f7f7f7">5359190,3…</div>
<div class="c" style="left:402px;top:21px;width:100px;background:#f7f7f7">7</div>
<div class="c" style="left:502px;top:21px;width:100px;background:#f7f7f7">8</div>
<div class="rh" style="top:21px">184</div>
<div class="c" style="left:0px;top:51px;width:102px;background:#fff">595382,3928</div>
<div class="c" style="left:102px;top:51px;width:100px;background:#fff">5359190,3…</div>
<div class="c" style="left:202px;top:51px;width:100px;background:#fff">595882,3928</div>
<div class="c" style="left:302px;top:51px;width:100px;background:#fff">5358690,3…</div>
<div class="c" style="left:402px;top:51px;width:100px;background:#fff">8</div>
<div class="c" style="left:502px;top:51px;width:100px;background:#fff">8</div>
<div class="rh" style="top:51px">185</div>
<div class="c" style="left:0px;top:81px;width:102px;background:#f7f7f7">595382,3928</div>
<div class="c" style="left:102px;top:81px;width:100px;background:#f7f7f7">5358690,3…</div>
<div class="c" style="left:202px;top:81px;width:100px;background:#f7f7f7">595882,3928</div>
<div class="c" style="left:302px;top:81px;width:100px;background:#f7f7f7">5358190,3…</div>
<div class="c" style="left:402px;top:81px;width:100px;background:#f7f7f7">9</div>
<div class="c" style="left:502px;top:81px;width:100px;background:#f7f7f7">8</div>
<div class="rh" style="top:81px">186</div>
<div class="c" style="left:0px;top:111px;width:102px;background:#fff">595382,3928</div>
<div class="c" style="left:102px;top:111px;width:100px;background:#fff">5358190,3…</div>
<div class="c" style="left:202px;top:111px;width:100px;background:#fff">595882,3928</div>
<div class="c" style="left:302px;top:111px;width:100px;background:#fff">5357690,3…</div>
<div class="c" style="left:402px;top:111px;width:100px;background:#fff">10</div>
<div class="c" style="left:502px;top:111px;width:100px;background:#fff">8</div>
<div class="rh" style="top:111px">187</div>
<div class="c" style="left:0px;top:141px;width:102px;background:#308cc6;color:#fff;border-right-color:#5c9fd2;border-bottom-color:#308cc6">595382,3928</div>
<div class="c" style="left:102px;top:141px;width:100px;background:#308cc6;color:#fff;border-right-color:#5c9fd2;border-bottom-color:#308cc6">5357690,3…</div>
<div class="c" style="left:202px;top:141px;width:100px;background:#308cc6;color:#fff;border-right-color:#5c9fd2;border-bottom-color:#308cc6">595882,3928</div>
<div class="c" style="left:302px;top:141px;width:100px;background:#308cc6;color:#fff;border-right-color:#5c9fd2;border-bottom-color:#308cc6">5357190,3…</div>
<div class="c" style="left:402px;top:141px;width:100px;background:#308cc6;color:#fff;border-right-color:#5c9fd2;border-bottom-color:#308cc6">11</div>
<div class="c" style="left:502px;top:141px;width:100px;background:#308cc6;color:#fff;border-right-color:#5c9fd2;border-bottom-color:#308cc6">8</div>
<div class="rh" style="top:141px">188</div>
<div class="c" style="left:0px;top:171px;width:102px;background:#fff">595382,3928</div>
<div class="c" style="left:102px;top:171px;width:100px;background:#fff">5357190,3…</div>
<div class="c" style="left:202px;top:171px;width:100px;background:#fff">595882,3928</div>
<div class="c" style="left:302px;top:171px;width:100px;background:#fff">5356690,3…</div>
<div class="c" style="left:402px;top:171px;width:100px;background:#fff">12</div>
<div class="c" style="left:502px;top:171px;width:100px;background:#fff">8</div>
<div class="rh" style="top:171px">189</div>
<div class="c" style="left:0px;top:201px;width:102px;background:#f7f7f7">595382,3928</div>
<div class="c" style="left:102px;top:201px;width:100px;background:#f7f7f7">5356690,3…</div>
<div class="c" style="left:202px;top:201px;width:100px;background:#f7f7f7">595882,3928</div>
<div class="c" style="left:302px;top:201px;width:100px;background:#f7f7f7">5356190,3…</div>
<div class="c" style="left:402px;top:201px;width:100px;background:#f7f7f7">13</div>
<div class="c" style="left:502px;top:201px;width:100px;background:#f7f7f7">8</div>
<div class="rh" style="top:201px">190</div>
<div class="c" style="left:0px;top:231px;width:102px;background:#fff">595382,3928</div>
<div class="c" style="left:102px;top:231px;width:100px;background:#fff">5356190,3…</div>
<div class="c" style="left:202px;top:231px;width:100px;background:#fff">595882,3928</div>
<div class="c" style="left:302px;top:231px;width:100px;background:#fff">5355690,3…</div>
<div class="c" style="left:402px;top:231px;width:100px;background:#fff">14</div>
<div class="c" style="left:502px;top:231px;width:100px;background:#fff">8</div>
<div class="rh" style="top:231px">191</div>
</div>
<div class="a" style="left:605px;top:69px;width:11px;height:257px;background:#dcdcdc;border-left:1px solid #cfcfcf"></div>
<div class="a" style="left:605px;top:69px;width:11px;height:14px;background:#f2f2f2;border-left:1px solid #cfcfcf;border-bottom:1px solid #d0d0d0"></div>
<svg class="a" style="left:605px;top:72px" width="11" height="8"><path d="M2 6L6 2L10 6Z" fill="#404040"/></svg>
<div class="a" style="left:605px;top:312px;width:11px;height:14px;background:#f2f2f2;border-left:1px solid #cfcfcf;border-top:1px solid #d0d0d0"></div>
<svg class="a" style="left:605px;top:316px" width="11" height="8"><path d="M2 2L6 6L10 2Z" fill="#404040"/></svg>
<div class="a" style="left:0;top:326px;width:605px;height:14px;background:#f3f3f3;border-top:1px solid #d3d3d3;border-bottom:1px solid #c9c9c9"></div>
<div class="a" style="left:14px;top:327px;width:107px;height:12px;background:#e1e1e1;border-right:1px solid #d0d0d0"></div>
<div class="a" style="left:0px;top:327px;width:14px;height:12px;background:#f6f6f6;border-right:1px solid #d8d8d8"></div>
<svg class="a" style="left:2px;top:329px" width="10" height="10"><path d="M7 1.5L3 5L7 8.5Z" fill="#404040"/></svg>
<div class="a" style="left:588px;top:327px;width:14px;height:12px;background:#f6f6f6;border-left:1px solid #d8d8d8;border-right:1px solid #d8d8d8"></div>
<svg class="a" style="left:590px;top:329px" width="10" height="10"><path d="M3 1.5L7 5L3 8.5Z" fill="#404040"/></svg>
<div class="a" style="left:602px;top:326px;width:14px;height:14px;background:#e8e8e8"></div>
<div class="a" style="left:0;top:340px;width:616px;height:31px;background:#efefef"></div>
<div class="a" style="left:3px;top:344px;width:156px;height:24px;border:1px solid #bdbdbd;border-radius:3px;background:linear-gradient(#fbfbfb,#ededed)"></div>
<svg class="a" style="left:7px;top:349px" width="14" height="14" viewBox="0 0 14 14"><rect x="0.5" y="0.5" width="13" height="13" rx="1.2" fill="#e3ecf7" stroke="#98b4d6"/><rect x="1" y="1" width="12" height="3" fill="#b9cde6"/><path d="M2 2.5H4M6 2.5H12M2 6.3H4M6 6.3H12M2 8.5H4M6 8.5H12M2 10.7H4M6 10.7H12" stroke="#a6bcd8" stroke-width="0.9"/><path d="M5 4V13" stroke="#b0c4de" stroke-width="0.6"/></svg>
<div class="a" style="left:24px;top:348px;font-size:14.7px;line-height:18px;white-space:nowrap;color:#141414;letter-spacing:0.15px">Show All Features</div>
<svg class="a" style="left:150px;top:360px" width="8" height="6"><path d="M1 1.5L4 4.5L7 1.5Z" fill="#303030"/></svg>
<svg class="a" style="left:571px;top:348px" width="14" height="14" viewBox="0 0 14 14"><rect x="0.5" y="0.5" width="13" height="13" fill="#dae6f4" stroke="#8aa6c6"/><rect x="6" y="2.5" width="6" height="3.5" rx="1" fill="#fff" stroke="#8aa6c6" stroke-width="0.7"/><rect x="6" y="8" width="6" height="3.5" rx="1" fill="#fff" stroke="#8aa6c6" stroke-width="0.7"/><path d="M2 4.2H5M2 9.7H5" stroke="#444" stroke-width="1.2"/></svg>
<div class="a" style="left:590px;top:345px;width:26px;height:22px;border:1px solid #c6c6c6;border-radius:3px;background:#e0e0e0"></div>
<svg class="a" style="left:595px;top:348px" width="14" height="14" viewBox="0 0 14 14"><rect x="0.5" y="0.5" width="13" height="13" rx="1" fill="#e3ecf7" stroke="#98b4d6"/><rect x="1" y="1" width="12" height="3" fill="#b3c8e4"/><path d="M2 2.5H4M6 2.5H12M2 6.3H4M6 6.3H12M2 8.5H4M6 8.5H12M2 10.7H4M6 10.7H12" stroke="#9fb6d6" stroke-width="0.9"/></svg>
</div>
<svg class="a" style="left:302px;top:75px" width="16" height="16" viewBox="0 0 16 16"><path d="M2.2 14.8 L3 11.2 L10.8 2.2 L13.2 4.3 L5.3 13.3 Z" fill="#e9dc4e" stroke="#8f8a3a" stroke-width="0.9"/><path d="M2.2 14.8 L3 11.2 L5.3 13.3 Z" fill="#7a7a7a"/><path d="M4.2 12 L11.9 3.2" stroke="#c9b92e" stroke-width="1"/></svg>
<svg class="a" style="left:326px;top:75px" width="16" height="16" viewBox="0 0 16 16"><rect x="1" y="3" width="10" height="2.5" fill="#cfcfcf"/><rect x="1" y="7" width="10" height="2.5" fill="#cfcfcf"/><rect x="1" y="11" width="10" height="2.5" fill="#cfcfcf"/><path d="M6 14 L7 11 L13.5 2.5 L15 4 L8.5 12.5 Z" fill="#e2e2e2" stroke="#bdbdbd" stroke-width="0.8"/></svg>
<svg class="a" style="left:351px;top:75px" width="16" height="16" viewBox="0 0 16 16"><rect x="1.5" y="1.5" width="13" height="13" rx="1" fill="#dedede" stroke="#bdbdbd"/><rect x="4" y="2" width="8" height="5" fill="#efefef"/><rect x="4" y="9" width="8" height="5" fill="#e8e8e8" stroke="#cfcfcf" stroke-width="0.6"/><path d="M7 10.5 L9.5 12 L7 13.5Z" fill="#bdbdbd"/></svg>
<div class="a" style="left:375px;top:77px;width:1px;height:12px;background:#d0d0d0;box-shadow:1px 0 0 #fbfbfb"></div>
<svg class="a" style="left:383px;top:75px" width="16" height="16" viewBox="0 0 16 16"><rect x="1" y="1.5" width="13" height="12" fill="#e6e6e6" stroke="#bdbdbd" stroke-width="0.8"/><rect x="1" y="1.5" width="13" height="3" fill="#d6d6d6"/><path d="M1 7.5 H14 M1 10.5 H14 M5 4.5 V13.5" stroke="#cfcfcf" stroke-width="0.8"/><rect x="9" y="9" width="7" height="7" fill="#d0d0d0"/><path d="M10.5 10.5 L14.5 14.5 M14.5 10.5 L10.5 14.5" stroke="#f4f4f4" stroke-width="1.2"/></svg>
<svg class="a" style="left:408px;top:75px" width="16" height="16" viewBox="0 0 16 16"><rect x="1.5" y="1.5" width="11" height="2" fill="#dcdcdc"/><rect x="2.5" y="4" width="10" height="11" fill="#e4dcdc" stroke="#cfc6c6" stroke-width="0.8"/><path d="M5.5 5.5 V14 M7.5 5.5 V14 M9.5 5.5 V14" stroke="#d2c6c6" stroke-width="1"/></svg>
<svg class="a" style="left:433px;top:75px" width="16" height="16" viewBox="0 0 16 16"><circle cx="12.5" cy="4.5" r="2" fill="none" stroke="#b8b8b8" stroke-width="1.1"/><circle cx="12.5" cy="11.5" r="2" fill="none" stroke="#b8b8b8" stroke-width="1.1"/><path d="M1 3 L11 10.5 M1 13 L11 5.5" stroke="#c4c4c4" stroke-width="1"/></svg>
<svg class="a" style="left:459px;top:75px" width="16" height="16" viewBox="0 0 16 16"><path d="M5 1.5 H10.5 L13.5 4.5 V12 H5 Z" fill="#f0f0f0" stroke="#b4b4b4" stroke-width="0.9"/><path d="M1.5 4.5 H7 L10 7.5 V14.5 H1.5 Z" fill="#dadada" stroke="#9c9c9c" stroke-width="0.9"/><path d="M3 9 H8 M3 11 H8" stroke="#b0b0b0" stroke-width="0.8"/></svg>
<svg class="a" style="left:484px;top:75px" width="16" height="16" viewBox="0 0 16 16"><rect x="2" y="2" width="10" height="13" rx="1" fill="#e4e4e4" stroke="#d2d2d2"/><rect x="4" y="1" width="6" height="3" fill="#d8d8d8"/><path d="M6 7 H10 V13 H6Z" fill="#f0f0f0"/></svg>
<div class="a" style="left:507px;top:77px;width:1px;height:12px;background:#d0d0d0;box-shadow:1px 0 0 #fbfbfb"></div>
<svg class="a" style="left:516px;top:75px" width="16" height="16" viewBox="0 0 16 16"><rect x="4.5" y="5.5" width="10" height="9.5" rx="1" fill="#f2e34a" stroke="#c9b634" stroke-width="0.9"/><path d="M7.5 2.2 C5 1.2 2 1.8 2.2 4 C2.4 5.5 4 5.8 5 5.9 C3 6 1.5 7 1.8 8.7 C2.2 10.8 5.5 10.9 7.5 9.8" fill="none" stroke="#3b2d4f" stroke-width="1.5"/></svg>
<svg class="a" style="left:541px;top:75px" width="16" height="16" viewBox="0 0 16 16"><rect x="0.5" y="1" width="13.5" height="4" rx="2" fill="#f2e34a" stroke="#cdb735" stroke-width="0.8"/><rect x="0.5" y="6" width="13.5" height="4" rx="2" fill="#f2e34a" stroke="#cdb735" stroke-width="0.8"/><rect x="0.5" y="11" width="13.5" height="4" rx="2" fill="#f2e34a" stroke="#cdb735" stroke-width="0.8"/></svg>
<svg class="a" style="left:566px;top:75px" width="16" height="16" viewBox="0 0 16 16"><rect x="0.8" y="1.2" width="13" height="13.5" fill="#e0e0e0" stroke="#a8a8a8" stroke-width="0.9"/><path d="M0.8 1.2 L13.8 14.7 H0.8 Z" fill="#f2e34a" stroke="#cdb735" stroke-width="0.9"/><path d="M1.5 1.2 L13.8 14" stroke="#fff" stroke-width="0.8"/></svg>
<svg class="a" style="left:591px;top:75px" width="16" height="16" viewBox="0 0 16 16"><rect x="0.5" y="1.2" width="9.5" height="9.5" rx="1" fill="#f2e34a" stroke="#cdb735" stroke-width="0.8"/><circle cx="11.5" cy="11.8" r="3.6" fill="#fff" stroke="#d3283c" stroke-width="1.5"/><path d="M9.3 13.8 L13.8 9.6" stroke="#d3283c" stroke-width="1.3"/></svg>
<svg class="a" style="left:616px;top:75px" width="16" height="16" viewBox="0 0 16 16"><path d="M0.5 2.5 H13.5 L8.5 9 V15 H5.5 V9 Z" fill="#5b87b8" stroke="#476e99" stroke-width="0.8"/><rect x="0.5" y="1" width="13" height="2.5" rx="1.2" fill="#f2e34a" stroke="#cdb735" stroke-width="0.6"/></svg>
<svg class="a" style="left:641px;top:75px" width="16" height="16" viewBox="0 0 16 16"><rect x="0.5" y="1" width="13.5" height="13.5" rx="1" fill="#c9daf0" stroke="#8aa6c6" stroke-width="0.9"/><rect x="1" y="11" width="12.5" height="3.3" fill="#e7d444"/><path d="M1 6 H13.5 M1 8.5 H13.5" stroke="#ffffff" stroke-width="0.8"/><path d="M7.3 2.5 V12.5 M4 5.5 L7.3 2.3 L10.5 5.5" fill="none" stroke="#2f5d8f" stroke-width="1.6"/></svg>
<svg class="a" style="left:665px;top:75px" width="16" height="16" viewBox="0 0 16 16"><rect x="2.5" y="2.5" width="10" height="10" fill="#f2e34a" stroke="#cdb735" stroke-width="0.6"/><path d="M7.5 0.5 L10 3 L5 3Z M7.5 15.5 L10 12.5 L5 12.5Z M0 8 L3 5.5 L3 10.5Z M15 8 L12 5.5 L12 10.5Z" fill="#4f7fb4"/><path d="M3.8 3.8 L11.2 11.2 M11.2 3.8 L3.8 11.2" stroke="#4f7fb4" stroke-width="2"/></svg>
<svg class="a" style="left:690px;top:74px" width="17" height="17" viewBox="0 0 17 17"><rect x="0.8" y="2.5" width="6" height="9" fill="#e9d64a" stroke="#b9a63a" stroke-width="0.6"/><path d="M1 16 L5.5 11.5" stroke="#d7b84a" stroke-width="2.2"/><path d="M4.5 12.5 L6.5 10.5" stroke="#333" stroke-width="1.4"/><circle cx="10" cy="6.8" r="5.6" fill="#eeeede" stroke="#3c3c3c" stroke-width="1"/></svg>
<div class="a" style="left:714px;top:78px;width:1px;height:11px;background:#d0d0d0;box-shadow:1px 0 0 #fbfbfb"></div>
<svg class="a" style="left:722px;top:75px" width="16" height="16" viewBox="0 0 16 16"><rect x="1" y="1" width="12" height="14" fill="#e6e6e6" stroke="#d2d2d2" stroke-width="0.8"/><rect x="3" y="1" width="2" height="14" fill="#d2d2d2"/><circle cx="12" cy="12" r="3.3" fill="#d6d6d6"/><path d="M12 9.5V14.5M9.5 12H14.5" stroke="#f4f4f4" stroke-width="1"/></svg>
<svg class="a" style="left:748px;top:75px" width="16" height="16" viewBox="0 0 16 16"><rect x="1" y="1" width="12" height="14" fill="#e6e6e6" stroke="#d2d2d2" stroke-width="0.8"/><rect x="3" y="1" width="2" height="14" fill="#d2d2d2"/><rect x="9" y="9.5" width="6" height="6" fill="#d6d6d6"/><path d="M10 10.5L14 14.5M14 10.5L10 14.5" stroke="#f4f4f4" stroke-width="1"/></svg>
<svg class="a" style="left:773px;top:75px" width="16" height="16" viewBox="0 0 16 16"><rect x="0.5" y="1.5" width="13.5" height="13.5" rx="1" fill="#dbe6f3" stroke="#8aa4c4" stroke-width="0.9"/><path d="M2 4 H6 M8 8 H12 M8 10.5 H12 M8 13 H12" stroke="#7f9cc0" stroke-width="0.8"/><path d="M2 15 L3 11.5 L10 2 L12 3.5 L5 13 Z" fill="#e8873a" stroke="#8c4a1c" stroke-width="0.8"/><path d="M2 15 L3 11.5 L5 13Z" fill="#444"/></svg>
<svg class="a" style="left:798px;top:75px" width="16" height="16" viewBox="0 0 16 16"><rect x="0.8" y="1" width="13" height="14" fill="#f4f4f4" stroke="#8c8c8c" stroke-width="1"/><rect x="0" y="14" width="14.5" height="2" fill="#8c8c8c"/><path d="M1 3.5H13.5M1 7H13.5M1 10.5H13.5" stroke="#a8a8a8" stroke-width="0.6"/><ellipse cx="5" cy="3.3" rx="1.6" ry="2" fill="#e04848"/><ellipse cx="10" cy="3.3" rx="1.6" ry="2" fill="#e04848"/><ellipse cx="4" cy="7" rx="1.6" ry="1.6" fill="#7cc46c"/><ellipse cx="7" cy="7" rx="1.6" ry="1.6" fill="#7cc46c"/><ellipse cx="3.5" cy="10.5" rx="1.5" ry="1.6" fill="#5e8cc4"/><ellipse cx="7" cy="10.5" rx="1.5" ry="1.6" fill="#5e8cc4"/><ellipse cx="10.5" cy="10.5" rx="1.5" ry="1.6" fill="#5e8cc4"/></svg>
<div class="a" style="left:821px;top:78px;width:1px;height:11px;background:#d0d0d0;box-shadow:1px 0 0 #fbfbfb"></div>
<svg class="a" style="left:830px;top:75px" width="16" height="16" viewBox="0 0 16 16"><rect x="0.8" y="2" width="13.5" height="3.2" rx="1" fill="#fafafa" stroke="#b0b0b0" stroke-width="0.7"/><path d="M6 3.6H13" stroke="#444" stroke-width="1.2"/><rect x="0.8" y="6.5" width="13.5" height="3.5" rx="1" fill="#a8dca0" stroke="#8cb884" stroke-width="0.7"/><rect x="0.8" y="11.5" width="13.5" height="3.2" rx="1" fill="#f4f4f4" stroke="#b8b8b8" stroke-width="0.7"/><path d="M2.5 13.1H5" stroke="#c83030" stroke-width="1.3"/><path d="M5 13.1H12" stroke="#e6b0b0" stroke-width="0.8"/></svg>
<div class="a" style="left:853px;top:78px;width:1px;height:11px;background:#d0d0d0;box-shadow:1px 0 0 #fbfbfb"></div>
<svg class="a" style="left:860px;top:74px" width="17" height="17" viewBox="0 0 17 17"><circle cx="7.2" cy="7.6" r="6.2" fill="#eeeeee" stroke="#8c8c8c" stroke-width="1" stroke-dasharray="1.6 0.9"/><circle cx="7.2" cy="7.6" r="4" fill="#4f78a8"/><path d="M6 5.4 L9.4 7.6 L6 9.8Z" fill="#fff"/><path d="M10.5 9.5 L16 14.2 L13.4 14.4 L14.8 16.5 L13.5 17 L12.4 14.9 L10.8 16.3Z" fill="#fff" stroke="#555" stroke-width="0.7"/></svg>
<svg class="a" style="left:887px;top:75px" width="16" height="16" viewBox="0 0 16 16"><rect x="2.5" y="1" width="12" height="12.5" fill="#fff" stroke="#7d7d7d" stroke-width="0.9"/><rect x="2.5" y="1" width="12" height="2.5" fill="#555"/><rect x="0.5" y="7" width="10" height="8" fill="#c9daf0" stroke="#8aa6c6" stroke-width="0.8"/><path d="M0.8 9.2H10.2 M4 9.2V15 M7 9.2 V15" stroke="#9db5d4" stroke-width="0.7"/></svg>
<div class="a" style="left:690px;top:93px;width:208px;height:265px;border:6px solid #f20000;border-top-width:6px;border-bottom-width:6px"></div>
<div class="a" style="left:293px;top:401px;width:613px;height:16px;background:linear-gradient(rgba(0,0,0,.26),rgba(0,0,0,.08) 50%,rgba(0,0,0,0))"></div>
</body></html>
